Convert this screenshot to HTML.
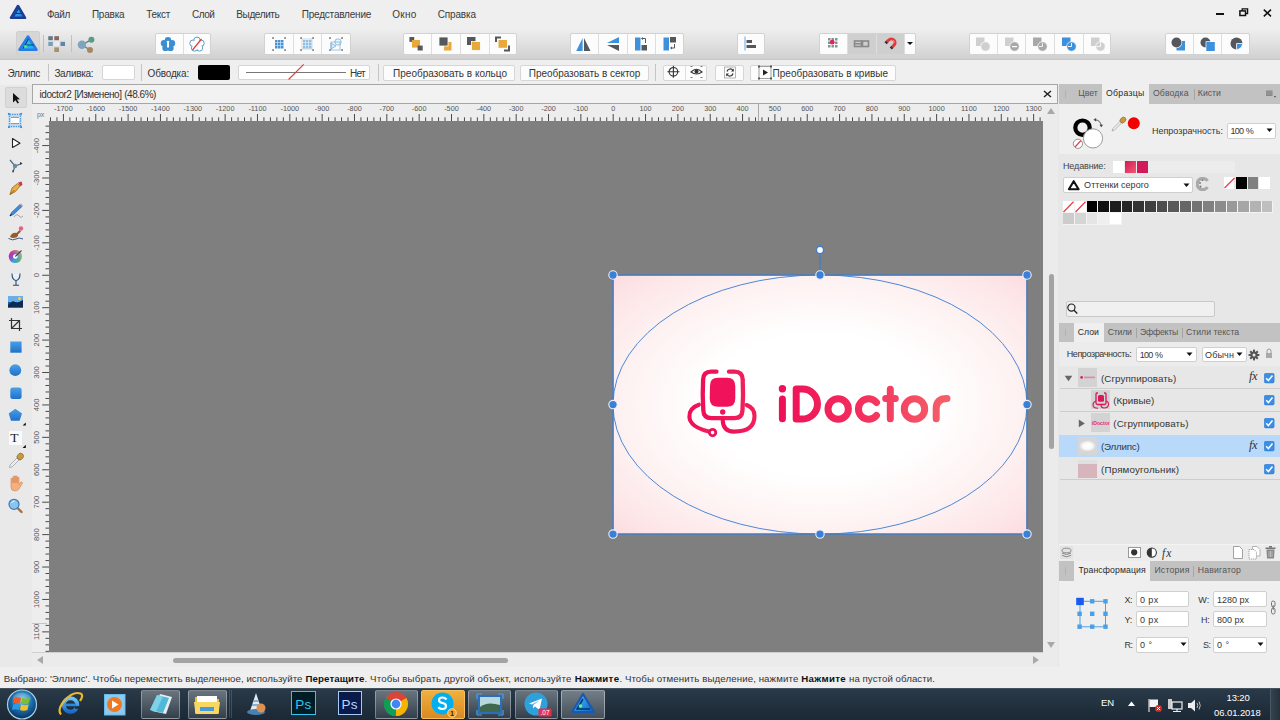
<!DOCTYPE html><html><head><meta charset="utf-8"><style>
*{margin:0;padding:0;box-sizing:border-box}
html,body{width:1280px;height:720px;overflow:hidden}
body{position:relative;background:#efefef;font-family:"Liberation Sans",sans-serif;color:#333}
.a{position:absolute}
.t{position:absolute;white-space:nowrap;line-height:1}
</style></head><body>
<div class="a" style="left:0px;top:0px;width:1280px;height:28px;background:#efefef"></div>
<svg class="a" style="left:9px;top:4px;" width="18" height="17" viewBox="0 0 18 17"><defs><linearGradient id="lg1" x1="0" y1="0" x2="1" y2="1"><stop offset="0" stop-color="#2ad0f0"/><stop offset="1" stop-color="#2a70e0"/></linearGradient></defs>
<path d="M9 2 L16 13.8 L2 13.8 Z" fill="url(#lg1)" stroke="#1c3c98" stroke-width="2.6" stroke-linejoin="round"/>
<path d="M9.5 4.5 L5 12.5 M7 9.5 H13" fill="none" stroke="#123070" stroke-width="1"/></svg>
<div class="t" style="left:46.90px;top:9.64px;font-size:10px;color:#3a3a3a;letter-spacing:-0.373px;">Файл</div>
<div class="t" style="left:91.90px;top:9.64px;font-size:10px;color:#3a3a3a;letter-spacing:-0.214px;">Правка</div>
<div class="t" style="left:146.30px;top:9.64px;font-size:10px;color:#3a3a3a;letter-spacing:-0.277px;">Текст</div>
<div class="t" style="left:191.90px;top:9.64px;font-size:10px;color:#3a3a3a;letter-spacing:-0.457px;">Слой</div>
<div class="t" style="left:236.30px;top:9.64px;font-size:10px;color:#3a3a3a;letter-spacing:-0.380px;">Выделить</div>
<div class="t" style="left:301.70px;top:9.64px;font-size:10px;color:#3a3a3a;letter-spacing:-0.201px;">Представление</div>
<div class="t" style="left:392.30px;top:9.64px;font-size:10px;color:#3a3a3a;letter-spacing:0.263px;">Окно</div>
<div class="t" style="left:437.70px;top:9.64px;font-size:10px;color:#3a3a3a;letter-spacing:-0.148px;">Справка</div>
<div class="a" style="left:1215.5px;top:12.8px;width:8px;height:2.4px;background:#111"></div>
<svg class="a" style="left:1238.5px;top:8px;" width="10" height="9" viewBox="0 0 10 9"><path d="M3.2 2.7V0.9h5.4v4.6h-1.8" fill="none" stroke="#111" stroke-width="1.3"/><rect x="0.9" y="2.9" width="5.6" height="4.6" fill="none" stroke="#111" stroke-width="1.5"/></svg>
<svg class="a" style="left:1262.5px;top:8.5px;" width="9" height="8" viewBox="0 0 9 8"><path d="M0.8 0.6L8 7.4M8 0.6L0.8 7.4" stroke="#111" stroke-width="1.5"/></svg>
<div class="a" style="left:0px;top:28px;width:1280px;height:32px;background:linear-gradient(#efefef 0%,#e2e2e2 45%,#cfcfcf 100%)"></div>
<div class="a" style="left:0px;top:59px;width:1280px;height:1px;background:#c8c8c8"></div>
<!--TOOLBAR-->
<div class="a" style="left:0px;top:60px;width:1280px;height:24px;background:#efefef"></div>
<!--CTX-->
<div class="a" style="left:0px;top:85px;width:32px;height:582px;background:#e9e9e9"></div>
<!--TOOLS-->
<div class="a" style="left:32px;top:84px;width:1026px;height:20px;background:#f2f2f2;border:1px solid #a6a6a6"></div>
<div class="t" style="left:39.60px;top:90.33px;font-size:10px;color:#333;letter-spacing:-0.468px;word-spacing:0.468px;">idoctor2 [Изменено] (48.6%)</div>
<svg class="a" style="left:1043px;top:90px;" width="9" height="8" viewBox="0 0 9 8"><path d="M1 1L8 7M8 1L1 7" stroke="#222" stroke-width="1.5"/></svg>
<div class="a" style="left:32px;top:104px;width:1011px;height:17px;background:#ededed"></div>
<div class="a" style="left:32px;top:121px;width:17px;height:531px;background:#ededed"></div>
<!--RULERS-->
<div class="a" style="left:49px;top:121px;width:994px;height:531px;background:#7f7f7f"></div>
<!--CANVAS-->
<div class="a" style="left:1043px;top:104px;width:16px;height:563px;background:#ebebeb"></div>
<div class="a" style="left:32px;top:652px;width:1011px;height:15px;background:#ebebeb"></div>
<!--SCROLL-->
<div class="a" style="left:1058px;top:84px;width:222px;height:583px;background:#e7e7e7"></div>
<!--PANEL-->
<div class="a" style="left:0px;top:667px;width:1280px;height:21px;background:#efefef"></div>
<!--STATUS-->
<div class="a" style="left:0px;top:688px;width:1280px;height:32px;background:linear-gradient(#2a3a48,#1b2835);border-top:1px solid #44525e"></div>
<!--TASK-->
<div class="a" style="left:16px;top:31px;width:24px;height:24px;background:#d6d6d6;border:1px solid #cfcfcf;border-radius:2px"></div>
<svg class="a" style="left:17px;top:34px;" width="22" height="19" viewBox="0 0 22 19"><defs><linearGradient id="ap" x1="0" y1="0" x2="1" y2="1"><stop offset="0" stop-color="#28d8f0"/><stop offset="1" stop-color="#1aa8e8"/></linearGradient></defs>
<path d="M11 2.5 L19.5 15.8 L2.5 15.8 Z" fill="url(#ap)" stroke="#2a7ae8" stroke-width="2.6" stroke-linejoin="round"/>
<path d="M11.5 5 L6 14.5 M8.5 11 H17" fill="none" stroke="#0d3d78" stroke-width="1.1"/><circle cx="8.5" cy="12.5" r="1.4" fill="#50e890"/></svg>
<div class="a" style="left:43px;top:35px;width:1px;height:17px;background:#c0c0c0"></div>
<svg class="a" style="left:47px;top:35px;" width="20" height="18" viewBox="0 0 20 18"><rect x="1.3" y="1.2" width="4.5" height="4" fill="#4f6b78" opacity="0.9"/><rect x="7.3" y="1.2" width="4.7" height="4" fill="#7b5a50" opacity="0.9"/><rect x="1.3" y="6.8" width="4.5" height="4.2" fill="#6a9ab0" opacity="0.9"/><rect x="7.3" y="6.8" width="4.7" height="4.2" fill="#f2e8f2"/><rect x="13.5" y="6.8" width="4.5" height="4.2" fill="#4a7fa0" opacity="0.9"/><rect x="7.3" y="12.4" width="4.7" height="4.6" fill="#a08868" opacity="0.9"/></svg>
<div class="a" style="left:71px;top:35px;width:1px;height:17px;background:#c0c0c0"></div>
<svg class="a" style="left:76px;top:35px;" width="20" height="18" viewBox="0 0 20 18"><path d="M6 9.8 L15.4 4.7 M6 9.8 L14 15" stroke="#6f7f88" stroke-width="1.4"/><circle cx="5.9" cy="9.8" r="4.2" fill="#7fa5bd"/><circle cx="15.4" cy="4.7" r="3" fill="#5a9a88"/><circle cx="14" cy="15" r="3" fill="#a48860"/></svg>
<div class="a" style="left:154.6px;top:32.5px;width:56.900000000000006px;height:22.9px;background:#fcfcfc;border:1px solid #d2d2d2;border-radius:2px"></div>
<div class="a" style="left:182.8px;top:33.5px;width:1px;height:20.9px;background:#dedede"></div>
<svg class="a" style="left:160px;top:36px;" width="16" height="16" viewBox="0 0 16 16"><g fill="#3b8ed3"><circle cx="8.00" cy="4.30" r="3.2"/><circle cx="11.99" cy="7.20" r="3.2"/><circle cx="10.47" cy="11.90" r="3.2"/><circle cx="5.53" cy="11.90" r="3.2"/><circle cx="4.01" cy="7.20" r="3.2"/><circle cx="8" cy="8.5" r="4.5"/></g><path d="M8 5.5v6" stroke="#fff" stroke-width="2"/><circle cx="8" cy="6" r="1.3" fill="#fff"/></svg>
<svg class="a" style="left:189px;top:36px;" width="16" height="16" viewBox="0 0 16 16"><g fill="#fff" stroke="#4a90c0" stroke-width="0.9"><circle cx="8.00" cy="4.30" r="3.2"/><circle cx="11.99" cy="7.20" r="3.2"/><circle cx="10.47" cy="11.90" r="3.2"/><circle cx="5.53" cy="11.90" r="3.2"/><circle cx="4.01" cy="7.20" r="3.2"/></g><g fill="#fff"><circle cx="8.00" cy="4.30" r="2.3"/><circle cx="11.99" cy="7.20" r="2.3"/><circle cx="10.47" cy="11.90" r="2.3"/><circle cx="5.53" cy="11.90" r="2.3"/><circle cx="4.01" cy="7.20" r="2.3"/><circle cx="8" cy="8.5" r="4.6"/></g><path d="M3.5 14 L12.5 3" stroke="#e04040" stroke-width="1.3"/></svg>
<div class="a" style="left:264.3px;top:32.5px;width:86.30000000000001px;height:22.9px;background:#fcfcfc;border:1px solid #d2d2d2;border-radius:2px"></div>
<div class="a" style="left:292.8px;top:33.5px;width:1px;height:20.9px;background:#dedede"></div>
<div class="a" style="left:321.3px;top:33.5px;width:1px;height:20.9px;background:#dedede"></div>
<svg class="a" style="left:271px;top:36px;" width="16" height="16" viewBox="0 0 16 16"><rect x="1.2" y="1.2" width="1.7" height="1.7" fill="#7a7a7a"/><rect x="13.2" y="1.2" width="1.7" height="1.7" fill="#7a7a7a"/><rect x="1.2" y="13.2" width="1.7" height="1.7" fill="#7a7a7a"/><rect x="13.2" y="13.2" width="1.7" height="1.7" fill="#7a7a7a"/><rect x="4" y="4" width="2.5" height="2.5" fill="#4a92d4"/><rect x="4" y="7" width="2.5" height="2.5" fill="#4a92d4"/><rect x="4" y="10" width="2.5" height="2.5" fill="#4a92d4"/><rect x="7" y="4" width="2.5" height="2.5" fill="#4a92d4"/><rect x="7" y="7" width="2.5" height="2.5" fill="#4a92d4"/><rect x="7" y="10" width="2.5" height="2.5" fill="#4a92d4"/><rect x="10" y="4" width="2.5" height="2.5" fill="#4a92d4"/><rect x="10" y="7" width="2.5" height="2.5" fill="#4a92d4"/><rect x="10" y="10" width="2.5" height="2.5" fill="#4a92d4"/></svg>
<svg class="a" style="left:299px;top:36px;" width="16" height="16" viewBox="0 0 16 16"><rect x="1.2" y="1.2" width="1.7" height="1.7" fill="#7a7a7a"/><rect x="13.2" y="1.2" width="1.7" height="1.7" fill="#7a7a7a"/><rect x="1.2" y="13.2" width="1.7" height="1.7" fill="#7a7a7a"/><rect x="13.2" y="13.2" width="1.7" height="1.7" fill="#7a7a7a"/><rect x="3" y="3" width="10" height="10" fill="none" stroke="#bbb" stroke-width="0.6"/><rect x="4" y="4" width="2.5" height="2.5" fill="#8cc0e8"/><rect x="4" y="7" width="2.5" height="2.5" fill="#8cc0e8"/><rect x="4" y="10" width="2.5" height="2.5" fill="#8cc0e8"/><rect x="7" y="4" width="2.5" height="2.5" fill="#8cc0e8"/><rect x="7" y="7" width="2.5" height="2.5" fill="#8cc0e8"/><rect x="7" y="10" width="2.5" height="2.5" fill="#8cc0e8"/><rect x="10" y="4" width="2.5" height="2.5" fill="#8cc0e8"/><rect x="10" y="7" width="2.5" height="2.5" fill="#8cc0e8"/><rect x="10" y="10" width="2.5" height="2.5" fill="#8cc0e8"/></svg>
<svg class="a" style="left:328px;top:36px;" width="16" height="16" viewBox="0 0 16 16"><rect x="1.2" y="1.2" width="1.7" height="1.7" fill="#7a7a7a"/><rect x="13.2" y="1.2" width="1.7" height="1.7" fill="#7a7a7a"/><rect x="1.2" y="13.2" width="1.7" height="1.7" fill="#7a7a7a"/><rect x="13.2" y="13.2" width="1.7" height="1.7" fill="#7a7a7a"/><circle cx="10" cy="6" r="3.2" fill="#eaf4fc" stroke="#7aaed8" stroke-width="0.8"/><path d="M3 7 L8 10 L3 13 Z" fill="#d8ecfa" stroke="#7aaed8" stroke-width="0.8"/><rect x="3" y="6" width="9" height="8" fill="none" stroke="#7aaed8" stroke-width="0.7"/></svg>
<div class="a" style="left:402.6px;top:32.5px;width:114.10000000000002px;height:22.9px;background:#fcfcfc;border:1px solid #d2d2d2;border-radius:2px"></div>
<div class="a" style="left:430.9px;top:33.5px;width:1px;height:20.9px;background:#dedede"></div>
<div class="a" style="left:459.5px;top:33.5px;width:1px;height:20.9px;background:#dedede"></div>
<div class="a" style="left:488.6px;top:33.5px;width:1px;height:20.9px;background:#dedede"></div>
<svg class="a" style="left:402px;top:32px;" width="28" height="23" viewBox="0 0 28 23"><rect x="7.4" y="5" width="4.8" height="4.8" fill="#54585c"/><rect x="10" y="8" width="8" height="7.6" fill="#e8a83a"/><rect x="15.6" y="13.6" width="5.1" height="4.9" fill="#54585c"/></svg>
<svg class="a" style="left:431px;top:32px;" width="28" height="23" viewBox="0 0 28 23"><rect x="13" y="10" width="7.5" height="8.5" fill="#e8a83a"/><rect x="8" y="5" width="9" height="9" fill="#54585c" stroke="#fff" stroke-width="0.8"/></svg>
<svg class="a" style="left:460px;top:32px;" width="28" height="23" viewBox="0 0 28 23"><rect x="7" y="5" width="8.5" height="8" fill="#54585c"/><rect x="11.5" y="9.5" width="9" height="9" fill="#e8a83a" stroke="#fff" stroke-width="0.8"/></svg>
<svg class="a" style="left:489px;top:32px;" width="28" height="23" viewBox="0 0 28 23"><path d="M7 10V5.5h5" fill="none" stroke="#54585c" stroke-width="2"/><path d="M20 13.5V18.5h-5" fill="none" stroke="#54585c" stroke-width="2"/><rect x="9.5" y="8" width="8.5" height="7.8" fill="#e8a83a"/></svg>
<div class="a" style="left:569.7px;top:32.5px;width:114.39999999999998px;height:22.9px;background:#fcfcfc;border:1px solid #d2d2d2;border-radius:2px"></div>
<div class="a" style="left:598.2px;top:33.5px;width:1px;height:20.9px;background:#dedede"></div>
<div class="a" style="left:626.5px;top:33.5px;width:1px;height:20.9px;background:#dedede"></div>
<div class="a" style="left:655.3px;top:33.5px;width:1px;height:20.9px;background:#dedede"></div>
<svg class="a" style="left:570px;top:32px;" width="28" height="23" viewBox="0 0 28 23"><path d="M12.6 6 L12.6 19 L6.2 19 Z" fill="#3d91dc"/><path d="M14 6 L14 19 L20.5 19 Z" fill="#54585c"/></svg>
<svg class="a" style="left:598px;top:32px;" width="28" height="23" viewBox="0 0 28 23"><path d="M21 5 L21 11 L9 11 Z" fill="#3d91dc"/><path d="M21 19 L21 13 L9 13 Z" fill="#54585c"/></svg>
<svg class="a" style="left:627px;top:32px;" width="28" height="23" viewBox="0 0 28 23"><rect x="8" y="5.5" width="5.5" height="13" fill="#3d91dc"/><rect x="14.5" y="13" width="5.5" height="5.5" fill="#54585c"/><path d="M15 6.5h3.5v4.5" fill="none" stroke="#54585c" stroke-width="1"/><path d="M14 6.5l2-1.6v3.2z" fill="#54585c"/></svg>
<svg class="a" style="left:655px;top:32px;" width="28" height="23" viewBox="0 0 28 23"><rect x="8.5" y="5.5" width="5.5" height="13" fill="#3d91dc"/><rect x="15" y="5" width="6" height="5.5" fill="#54585c"/><path d="M19.5 12v4h-3.5" fill="none" stroke="#54585c" stroke-width="1"/><path d="M15 16l2-1.6v3.2z" fill="#54585c"/></svg>
<div class="a" style="left:737.1px;top:32.5px;width:28.199999999999932px;height:22.9px;background:#fcfcfc;border:1px solid #d2d2d2;border-radius:2px"></div>
<svg class="a" style="left:737px;top:32px;" width="28" height="23" viewBox="0 0 28 23"><rect x="7.5" y="4.5" width="1" height="14" fill="#6aa8e0"/><rect x="9.5" y="8" width="5.5" height="3" fill="#54585c"/><rect x="9.5" y="13" width="9.5" height="3" fill="#54585c"/></svg>
<div class="a" style="left:818.7px;top:32.5px;width:97.5px;height:22.9px;background:#fcfcfc;border:1px solid #d2d2d2;border-radius:2px"></div>
<div class="a" style="left:847px;top:33.5px;width:57px;height:20.9px;background:#cfcfcf"></div>
<div class="a" style="left:847px;top:33.5px;width:1px;height:20.9px;background:#dedede"></div>
<div class="a" style="left:875.5px;top:33.5px;width:1px;height:20.9px;background:#dedede"></div>
<div class="a" style="left:904px;top:33.5px;width:1px;height:20.9px;background:#dedede"></div>
<svg class="a" style="left:819px;top:32px;" width="28" height="23" viewBox="0 0 28 23"><rect x="9.0" y="6.0" width="2.5" height="2.5" fill="#7a9a88"/><rect x="9.0" y="9.5" width="2.5" height="2.5" fill="#7a9a88"/><rect x="9.0" y="13.0" width="2.5" height="2.5" fill="#7a9a88"/><rect x="12.5" y="6.0" width="2.5" height="2.5" fill="#7a9a88"/><rect x="12.5" y="9.5" width="2.5" height="2.5" fill="#7a9a88"/><rect x="12.5" y="13.0" width="2.5" height="2.5" fill="#7a9a88"/><rect x="16.0" y="6.0" width="2.5" height="2.5" fill="#7a9a88"/><rect x="16.0" y="9.5" width="2.5" height="2.5" fill="#7a9a88"/><rect x="16.0" y="13.0" width="2.5" height="2.5" fill="#7a9a88"/><circle cx="13.2" cy="10.2" r="2.4" fill="#e0206a"/></svg>
<svg class="a" style="left:847px;top:32px;" width="28" height="23" viewBox="0 0 28 23"><rect x="7.5" y="9" width="7" height="5.5" fill="none" stroke="#888" stroke-width="1.6"/><rect x="15.5" y="9" width="6" height="5.5" fill="none" stroke="#888" stroke-width="1.6"/><rect x="8" y="11" width="6" height="1.5" fill="#888"/></svg>
<svg class="a" style="left:876px;top:32px;" width="28" height="23" viewBox="0 0 28 23"><g transform="rotate(45 15 11)"><path d="M11.3 12.8 V10.5 A3.7 3.7 0 0 1 18.7 10.5 V12.8" fill="none" stroke="#e23a3a" stroke-width="3"/><path d="M14 7.5 A2.5 2.5 0 0 1 17 9" fill="none" stroke="#f4a0a0" stroke-width="0.8"/><rect x="9.8" y="12.8" width="3" height="2.2" fill="#333"/><rect x="17.2" y="12.8" width="3" height="2.2" fill="#333"/></g></svg>
<svg class="a" style="left:904px;top:32px;" width="12" height="23" viewBox="0 0 12 23"><path d="M3 10h6l-3 3z" fill="#111"/></svg>
<div class="a" style="left:968.5px;top:32.5px;width:142.79999999999995px;height:22.9px;background:#fcfcfc;border:1px solid #d2d2d2;border-radius:2px"></div>
<div class="a" style="left:996.9px;top:33.5px;width:1px;height:20.9px;background:#dedede"></div>
<div class="a" style="left:1025.4px;top:33.5px;width:1px;height:20.9px;background:#dedede"></div>
<div class="a" style="left:1054.3px;top:33.5px;width:1px;height:20.9px;background:#dedede"></div>
<div class="a" style="left:1083.2px;top:33.5px;width:1px;height:20.9px;background:#dedede"></div>
<svg class="a" style="left:969px;top:32px;" width="28" height="23" viewBox="0 0 28 23"><rect x="7" y="5.5" width="8.5" height="8.5" fill="#cfcfcf"/><circle cx="16.5" cy="14.5" r="4.8" fill="#cfcfcf" stroke="#fff" stroke-width="0.8"/></svg>
<svg class="a" style="left:997.5px;top:32px;" width="28" height="23" viewBox="0 0 28 23"><rect x="7" y="5.5" width="8.5" height="8.5" fill="#cfcfcf"/><circle cx="16.5" cy="14.5" r="4.8" fill="#a8a8a8" stroke="#fff" stroke-width="0.8"/><rect x="14" y="14" width="5" height="1.2" fill="#fff"/></svg>
<svg class="a" style="left:1026px;top:32px;" width="28" height="23" viewBox="0 0 28 23"><rect x="7" y="5.5" width="8.5" height="8.5" fill="#a8a8a8"/><circle cx="16.5" cy="14.5" r="4.8" fill="#a8a8a8" stroke="#fff" stroke-width="0.8"/><path d="M16.5 14.5v-3.5M16.5 14.5h-3.5" stroke="#fff" stroke-width="0.8"/></svg>
<svg class="a" style="left:1054.7px;top:32px;" width="28" height="23" viewBox="0 0 28 23"><rect x="7" y="5.5" width="8.5" height="8.5" fill="#3d91dc"/><circle cx="16.5" cy="14.5" r="4.8" fill="#3d91dc" stroke="#fff" stroke-width="0.8"/><path d="M16.5 14.5v-3.5M16.5 14.5h-3.5" stroke="#fff" stroke-width="0.9"/></svg>
<svg class="a" style="left:1083.5px;top:32px;" width="28" height="23" viewBox="0 0 28 23"><rect x="7" y="5.5" width="8.5" height="8.5" fill="#cfcfcf"/><circle cx="16.5" cy="14.5" r="4.8" fill="#cfcfcf" stroke="#fff" stroke-width="0.8"/><path d="M16.5 14.5v-4M16.5 14.5h-4" stroke="#fff" stroke-width="0.8"/></svg>
<div class="a" style="left:1164.5px;top:32.5px;width:85.70000000000005px;height:22.9px;background:#fcfcfc;border:1px solid #d2d2d2;border-radius:2px"></div>
<div class="a" style="left:1192.8px;top:33.5px;width:1px;height:20.9px;background:#dedede"></div>
<div class="a" style="left:1221.3px;top:33.5px;width:1px;height:20.9px;background:#dedede"></div>
<svg class="a" style="left:1164.5px;top:32px;" width="28" height="23" viewBox="0 0 28 23"><rect x="11.5" y="9" width="8.5" height="9.5" fill="#3d91dc"/><circle cx="11.5" cy="10.5" r="5.6" fill="#fff"/><circle cx="11.5" cy="10.5" r="5" fill="#54585c"/></svg>
<svg class="a" style="left:1193px;top:32px;" width="28" height="23" viewBox="0 0 28 23"><circle cx="12.5" cy="10.5" r="5" fill="#54585c"/><rect x="12.6" y="9.3" width="9.6" height="9.8" fill="#fff"/><rect x="13.3" y="10" width="8.5" height="9" fill="#3d91dc"/></svg>
<svg class="a" style="left:1221.5px;top:32px;" width="28" height="23" viewBox="0 0 28 23"><circle cx="14.5" cy="11.5" r="6" fill="#54585c"/><path d="M14.5 11.5 H20.5 A6 6 0 0 1 14.5 17.5 Z" fill="#3d91dc" stroke="#fff" stroke-width="0.8"/></svg>
<div class="t" style="left:7.50px;top:69.13px;font-size:10px;color:#353535;letter-spacing:-0.339px;">Эллипс</div>
<div class="a" style="left:48px;top:64px;width:1px;height:17px;background:#c4c4c4"></div>
<div class="t" style="left:54.40px;top:69.13px;font-size:10px;color:#353535;letter-spacing:-0.310px;">Заливка:</div>
<div class="a" style="left:101.5px;top:64.6px;width:33px;height:15.5px;background:#fff;border:1px solid #d6d6d6;border-radius:2px"></div>
<div class="a" style="left:141px;top:64px;width:1px;height:17px;background:#c4c4c4"></div>
<div class="t" style="left:147.60px;top:69.13px;font-size:10px;color:#353535;letter-spacing:-0.179px;">Обводка:</div>
<div class="a" style="left:198px;top:64.6px;width:32px;height:15.5px;background:#000;border-radius:2px"></div>
<div class="a" style="left:237.8px;top:64.7px;width:132.4px;height:15.6px;background:#fff;border:1px solid #d6d6d6;border-radius:2px"></div>
<div class="a" style="left:246.4px;top:72px;width:100px;height:1px;background:#777"></div>
<svg class="a" style="left:286px;top:63px;" width="20" height="18" viewBox="0 0 20 18"><path d="M2.6 16.5 L17.7 1.4" stroke="#e23a3a" stroke-width="1.1"/></svg>
<div class="t" style="left:350.00px;top:68.63px;font-size:10px;color:#353535;letter-spacing:-0.777px;">Нет</div>
<div class="a" style="left:377.5px;top:64px;width:1px;height:17px;background:#c4c4c4"></div>
<div class="a" style="left:383.3px;top:64.6px;width:131.9px;height:16.5px;background:#fcfcfc;border:1px solid #d6d6d6;border-radius:2px"></div>
<div class="t" style="left:393.10px;top:69.13px;font-size:10px;color:#353535;">Преобразовать в кольцо</div>
<div class="a" style="left:520px;top:64.6px;width:128.7px;height:16.5px;background:#fcfcfc;border:1px solid #d6d6d6;border-radius:2px"></div>
<div class="t" style="left:528.80px;top:69.13px;font-size:10px;color:#353535;letter-spacing:-0.045px;word-spacing:0.045px;">Преобразовать в сектор</div>
<div class="a" style="left:654.5px;top:64px;width:1px;height:17px;background:#c4c4c4"></div>
<div class="a" style="left:662.6px;top:64.6px;width:44.7px;height:16.5px;background:#fcfcfc;border:1px solid #d6d6d6;border-radius:2px"></div>
<div class="a" style="left:685.3px;top:65.5px;width:1px;height:14px;background:#e0e0e0"></div>
<svg class="a" style="left:666px;top:65px;" width="15" height="14" viewBox="0 0 15 14"><circle cx="7.4" cy="6.8" r="4.3" fill="none" stroke="#333" stroke-width="1.1"/><path d="M7.4 0.8v12M1.4 6.8h12" stroke="#333" stroke-width="1.1"/></svg>
<svg class="a" style="left:689px;top:65px;" width="15" height="14" viewBox="0 0 15 14"><path d="M1.5 1.5h2M11.5 1.5h2M1.5 12.5h2M11.5 12.5h2" stroke="#555" stroke-width="0.8"/><path d="M2 7 Q7.5 1.5 13 7 Q7.5 11 2 7Z" fill="none" stroke="#333" stroke-width="1.1"/><circle cx="7.5" cy="6.5" r="2" fill="#333"/></svg>
<div class="a" style="left:714.6px;top:64.6px;width:29.9px;height:16.5px;background:#fcfcfc;border:1px solid #d6d6d6;border-radius:2px"></div>
<svg class="a" style="left:723px;top:65px;" width="14" height="15" viewBox="0 0 14 15"><rect x="1.5" y="2" width="11" height="11" fill="none" stroke="#999" stroke-width="0.7"/><path d="M4 6.5 A3.3 3.3 0 0 1 10 5.5M10 8.5 A3.3 3.3 0 0 1 4 9.5" fill="none" stroke="#333" stroke-width="1.2"/><path d="M10.8 3.6v2.8h-2.8z M3.2 11.4V8.6h2.8z" fill="#333"/></svg>
<div class="a" style="left:749.6px;top:64.6px;width:146.7px;height:16.5px;background:#fcfcfc;border:1px solid #d6d6d6;border-radius:2px"></div>
<svg class="a" style="left:757px;top:65px;" width="16" height="15" viewBox="0 0 16 15"><rect x="2" y="1.5" width="12" height="12" fill="none" stroke="#888" stroke-width="0.8"/><path d="M6 4.5 L11 7.5 L6 10.5Z" fill="#222"/><rect x="1" y="0.5" width="2" height="2" fill="#555"/><rect x="13" y="12.5" width="2" height="2" fill="#555"/><rect x="13" y="0.5" width="2" height="2" fill="#555"/><rect x="1" y="12.5" width="2" height="2" fill="#555"/></svg>
<div class="t" style="left:772.60px;top:69.13px;font-size:10px;color:#353535;">Преобразовать в кривые</div>
<svg class="a" style="left:49px;top:104px;" width="994" height="17" viewBox="0 0 994 17"><rect x="0.98" y="13.3" width="1" height="3.7" fill="#4a4a4a"/><rect x="7.45" y="13.3" width="1" height="3.7" fill="#4a4a4a"/><rect x="13.92" y="10" width="1" height="7" fill="#4a4a4a"/><text x="14.42" y="7.4" font-size="7.3" text-anchor="middle" fill="#555" font-family="Liberation Sans">-1700</text><rect x="20.39" y="13.3" width="1" height="3.7" fill="#4a4a4a"/><rect x="26.86" y="13.3" width="1" height="3.7" fill="#4a4a4a"/><rect x="33.32" y="13.3" width="1" height="3.7" fill="#4a4a4a"/><rect x="39.79" y="13.3" width="1" height="3.7" fill="#4a4a4a"/><rect x="46.26" y="10" width="1" height="7" fill="#4a4a4a"/><text x="46.76" y="7.4" font-size="7.3" text-anchor="middle" fill="#555" font-family="Liberation Sans">-1600</text><rect x="52.73" y="13.3" width="1" height="3.7" fill="#4a4a4a"/><rect x="59.20" y="13.3" width="1" height="3.7" fill="#4a4a4a"/><rect x="65.66" y="13.3" width="1" height="3.7" fill="#4a4a4a"/><rect x="72.13" y="13.3" width="1" height="3.7" fill="#4a4a4a"/><rect x="78.60" y="10" width="1" height="7" fill="#4a4a4a"/><text x="79.10" y="7.4" font-size="7.3" text-anchor="middle" fill="#555" font-family="Liberation Sans">-1500</text><rect x="85.07" y="13.3" width="1" height="3.7" fill="#4a4a4a"/><rect x="91.54" y="13.3" width="1" height="3.7" fill="#4a4a4a"/><rect x="98.00" y="13.3" width="1" height="3.7" fill="#4a4a4a"/><rect x="104.47" y="13.3" width="1" height="3.7" fill="#4a4a4a"/><rect x="110.94" y="10" width="1" height="7" fill="#4a4a4a"/><text x="111.44" y="7.4" font-size="7.3" text-anchor="middle" fill="#555" font-family="Liberation Sans">-1400</text><rect x="117.41" y="13.3" width="1" height="3.7" fill="#4a4a4a"/><rect x="123.88" y="13.3" width="1" height="3.7" fill="#4a4a4a"/><rect x="130.34" y="13.3" width="1" height="3.7" fill="#4a4a4a"/><rect x="136.81" y="13.3" width="1" height="3.7" fill="#4a4a4a"/><rect x="143.28" y="10" width="1" height="7" fill="#4a4a4a"/><text x="143.78" y="7.4" font-size="7.3" text-anchor="middle" fill="#555" font-family="Liberation Sans">-1300</text><rect x="149.75" y="13.3" width="1" height="3.7" fill="#4a4a4a"/><rect x="156.22" y="13.3" width="1" height="3.7" fill="#4a4a4a"/><rect x="162.68" y="13.3" width="1" height="3.7" fill="#4a4a4a"/><rect x="169.15" y="13.3" width="1" height="3.7" fill="#4a4a4a"/><rect x="175.62" y="10" width="1" height="7" fill="#4a4a4a"/><text x="176.12" y="7.4" font-size="7.3" text-anchor="middle" fill="#555" font-family="Liberation Sans">-1200</text><rect x="182.09" y="13.3" width="1" height="3.7" fill="#4a4a4a"/><rect x="188.56" y="13.3" width="1" height="3.7" fill="#4a4a4a"/><rect x="195.02" y="13.3" width="1" height="3.7" fill="#4a4a4a"/><rect x="201.49" y="13.3" width="1" height="3.7" fill="#4a4a4a"/><rect x="207.96" y="10" width="1" height="7" fill="#4a4a4a"/><text x="208.46" y="7.4" font-size="7.3" text-anchor="middle" fill="#555" font-family="Liberation Sans">-1100</text><rect x="214.43" y="13.3" width="1" height="3.7" fill="#4a4a4a"/><rect x="220.90" y="13.3" width="1" height="3.7" fill="#4a4a4a"/><rect x="227.36" y="13.3" width="1" height="3.7" fill="#4a4a4a"/><rect x="233.83" y="13.3" width="1" height="3.7" fill="#4a4a4a"/><rect x="240.30" y="10" width="1" height="7" fill="#4a4a4a"/><text x="240.80" y="7.4" font-size="7.3" text-anchor="middle" fill="#555" font-family="Liberation Sans">-1000</text><rect x="246.77" y="13.3" width="1" height="3.7" fill="#4a4a4a"/><rect x="253.24" y="13.3" width="1" height="3.7" fill="#4a4a4a"/><rect x="259.70" y="13.3" width="1" height="3.7" fill="#4a4a4a"/><rect x="266.17" y="13.3" width="1" height="3.7" fill="#4a4a4a"/><rect x="272.64" y="10" width="1" height="7" fill="#4a4a4a"/><text x="273.14" y="7.4" font-size="7.3" text-anchor="middle" fill="#555" font-family="Liberation Sans">-900</text><rect x="279.11" y="13.3" width="1" height="3.7" fill="#4a4a4a"/><rect x="285.58" y="13.3" width="1" height="3.7" fill="#4a4a4a"/><rect x="292.04" y="13.3" width="1" height="3.7" fill="#4a4a4a"/><rect x="298.51" y="13.3" width="1" height="3.7" fill="#4a4a4a"/><rect x="304.98" y="10" width="1" height="7" fill="#4a4a4a"/><text x="305.48" y="7.4" font-size="7.3" text-anchor="middle" fill="#555" font-family="Liberation Sans">-800</text><rect x="311.45" y="13.3" width="1" height="3.7" fill="#4a4a4a"/><rect x="317.92" y="13.3" width="1" height="3.7" fill="#4a4a4a"/><rect x="324.38" y="13.3" width="1" height="3.7" fill="#4a4a4a"/><rect x="330.85" y="13.3" width="1" height="3.7" fill="#4a4a4a"/><rect x="337.32" y="10" width="1" height="7" fill="#4a4a4a"/><text x="337.82" y="7.4" font-size="7.3" text-anchor="middle" fill="#555" font-family="Liberation Sans">-700</text><rect x="343.79" y="13.3" width="1" height="3.7" fill="#4a4a4a"/><rect x="350.26" y="13.3" width="1" height="3.7" fill="#4a4a4a"/><rect x="356.72" y="13.3" width="1" height="3.7" fill="#4a4a4a"/><rect x="363.19" y="13.3" width="1" height="3.7" fill="#4a4a4a"/><rect x="369.66" y="10" width="1" height="7" fill="#4a4a4a"/><text x="370.16" y="7.4" font-size="7.3" text-anchor="middle" fill="#555" font-family="Liberation Sans">-600</text><rect x="376.13" y="13.3" width="1" height="3.7" fill="#4a4a4a"/><rect x="382.60" y="13.3" width="1" height="3.7" fill="#4a4a4a"/><rect x="389.06" y="13.3" width="1" height="3.7" fill="#4a4a4a"/><rect x="395.53" y="13.3" width="1" height="3.7" fill="#4a4a4a"/><rect x="402.00" y="10" width="1" height="7" fill="#4a4a4a"/><text x="402.50" y="7.4" font-size="7.3" text-anchor="middle" fill="#555" font-family="Liberation Sans">-500</text><rect x="408.47" y="13.3" width="1" height="3.7" fill="#4a4a4a"/><rect x="414.94" y="13.3" width="1" height="3.7" fill="#4a4a4a"/><rect x="421.40" y="13.3" width="1" height="3.7" fill="#4a4a4a"/><rect x="427.87" y="13.3" width="1" height="3.7" fill="#4a4a4a"/><rect x="434.34" y="10" width="1" height="7" fill="#4a4a4a"/><text x="434.84" y="7.4" font-size="7.3" text-anchor="middle" fill="#555" font-family="Liberation Sans">-400</text><rect x="440.81" y="13.3" width="1" height="3.7" fill="#4a4a4a"/><rect x="447.28" y="13.3" width="1" height="3.7" fill="#4a4a4a"/><rect x="453.74" y="13.3" width="1" height="3.7" fill="#4a4a4a"/><rect x="460.21" y="13.3" width="1" height="3.7" fill="#4a4a4a"/><rect x="466.68" y="10" width="1" height="7" fill="#4a4a4a"/><text x="467.18" y="7.4" font-size="7.3" text-anchor="middle" fill="#555" font-family="Liberation Sans">-300</text><rect x="473.15" y="13.3" width="1" height="3.7" fill="#4a4a4a"/><rect x="479.62" y="13.3" width="1" height="3.7" fill="#4a4a4a"/><rect x="486.08" y="13.3" width="1" height="3.7" fill="#4a4a4a"/><rect x="492.55" y="13.3" width="1" height="3.7" fill="#4a4a4a"/><rect x="499.02" y="10" width="1" height="7" fill="#4a4a4a"/><text x="499.52" y="7.4" font-size="7.3" text-anchor="middle" fill="#555" font-family="Liberation Sans">-200</text><rect x="505.49" y="13.3" width="1" height="3.7" fill="#4a4a4a"/><rect x="511.96" y="13.3" width="1" height="3.7" fill="#4a4a4a"/><rect x="518.42" y="13.3" width="1" height="3.7" fill="#4a4a4a"/><rect x="524.89" y="13.3" width="1" height="3.7" fill="#4a4a4a"/><rect x="531.36" y="10" width="1" height="7" fill="#4a4a4a"/><text x="531.86" y="7.4" font-size="7.3" text-anchor="middle" fill="#555" font-family="Liberation Sans">-100</text><rect x="537.83" y="13.3" width="1" height="3.7" fill="#4a4a4a"/><rect x="544.30" y="13.3" width="1" height="3.7" fill="#4a4a4a"/><rect x="550.76" y="13.3" width="1" height="3.7" fill="#4a4a4a"/><rect x="557.23" y="13.3" width="1" height="3.7" fill="#4a4a4a"/><rect x="563.70" y="10" width="1" height="7" fill="#4a4a4a"/><text x="564.20" y="7.4" font-size="7.3" text-anchor="middle" fill="#555" font-family="Liberation Sans">0</text><rect x="570.17" y="13.3" width="1" height="3.7" fill="#4a4a4a"/><rect x="576.64" y="13.3" width="1" height="3.7" fill="#4a4a4a"/><rect x="583.10" y="13.3" width="1" height="3.7" fill="#4a4a4a"/><rect x="589.57" y="13.3" width="1" height="3.7" fill="#4a4a4a"/><rect x="596.04" y="10" width="1" height="7" fill="#4a4a4a"/><text x="596.54" y="7.4" font-size="7.3" text-anchor="middle" fill="#555" font-family="Liberation Sans">100</text><rect x="602.51" y="13.3" width="1" height="3.7" fill="#4a4a4a"/><rect x="608.98" y="13.3" width="1" height="3.7" fill="#4a4a4a"/><rect x="615.44" y="13.3" width="1" height="3.7" fill="#4a4a4a"/><rect x="621.91" y="13.3" width="1" height="3.7" fill="#4a4a4a"/><rect x="628.38" y="10" width="1" height="7" fill="#4a4a4a"/><text x="628.88" y="7.4" font-size="7.3" text-anchor="middle" fill="#555" font-family="Liberation Sans">200</text><rect x="634.85" y="13.3" width="1" height="3.7" fill="#4a4a4a"/><rect x="641.32" y="13.3" width="1" height="3.7" fill="#4a4a4a"/><rect x="647.78" y="13.3" width="1" height="3.7" fill="#4a4a4a"/><rect x="654.25" y="13.3" width="1" height="3.7" fill="#4a4a4a"/><rect x="660.72" y="10" width="1" height="7" fill="#4a4a4a"/><text x="661.22" y="7.4" font-size="7.3" text-anchor="middle" fill="#555" font-family="Liberation Sans">300</text><rect x="667.19" y="13.3" width="1" height="3.7" fill="#4a4a4a"/><rect x="673.66" y="13.3" width="1" height="3.7" fill="#4a4a4a"/><rect x="680.12" y="13.3" width="1" height="3.7" fill="#4a4a4a"/><rect x="686.59" y="13.3" width="1" height="3.7" fill="#4a4a4a"/><rect x="693.06" y="10" width="1" height="7" fill="#4a4a4a"/><text x="693.56" y="7.4" font-size="7.3" text-anchor="middle" fill="#555" font-family="Liberation Sans">400</text><rect x="699.53" y="13.3" width="1" height="3.7" fill="#4a4a4a"/><rect x="706.00" y="13.3" width="1" height="3.7" fill="#4a4a4a"/><rect x="712.46" y="13.3" width="1" height="3.7" fill="#4a4a4a"/><rect x="718.93" y="13.3" width="1" height="3.7" fill="#4a4a4a"/><rect x="725.40" y="10" width="1" height="7" fill="#4a4a4a"/><text x="725.90" y="7.4" font-size="7.3" text-anchor="middle" fill="#555" font-family="Liberation Sans">500</text><rect x="731.87" y="13.3" width="1" height="3.7" fill="#4a4a4a"/><rect x="738.34" y="13.3" width="1" height="3.7" fill="#4a4a4a"/><rect x="744.80" y="13.3" width="1" height="3.7" fill="#4a4a4a"/><rect x="751.27" y="13.3" width="1" height="3.7" fill="#4a4a4a"/><rect x="757.74" y="10" width="1" height="7" fill="#4a4a4a"/><text x="758.24" y="7.4" font-size="7.3" text-anchor="middle" fill="#555" font-family="Liberation Sans">600</text><rect x="764.21" y="13.3" width="1" height="3.7" fill="#4a4a4a"/><rect x="770.68" y="13.3" width="1" height="3.7" fill="#4a4a4a"/><rect x="777.14" y="13.3" width="1" height="3.7" fill="#4a4a4a"/><rect x="783.61" y="13.3" width="1" height="3.7" fill="#4a4a4a"/><rect x="790.08" y="10" width="1" height="7" fill="#4a4a4a"/><text x="790.58" y="7.4" font-size="7.3" text-anchor="middle" fill="#555" font-family="Liberation Sans">700</text><rect x="796.55" y="13.3" width="1" height="3.7" fill="#4a4a4a"/><rect x="803.02" y="13.3" width="1" height="3.7" fill="#4a4a4a"/><rect x="809.48" y="13.3" width="1" height="3.7" fill="#4a4a4a"/><rect x="815.95" y="13.3" width="1" height="3.7" fill="#4a4a4a"/><rect x="822.42" y="10" width="1" height="7" fill="#4a4a4a"/><text x="822.92" y="7.4" font-size="7.3" text-anchor="middle" fill="#555" font-family="Liberation Sans">800</text><rect x="828.89" y="13.3" width="1" height="3.7" fill="#4a4a4a"/><rect x="835.36" y="13.3" width="1" height="3.7" fill="#4a4a4a"/><rect x="841.82" y="13.3" width="1" height="3.7" fill="#4a4a4a"/><rect x="848.29" y="13.3" width="1" height="3.7" fill="#4a4a4a"/><rect x="854.76" y="10" width="1" height="7" fill="#4a4a4a"/><text x="855.26" y="7.4" font-size="7.3" text-anchor="middle" fill="#555" font-family="Liberation Sans">900</text><rect x="861.23" y="13.3" width="1" height="3.7" fill="#4a4a4a"/><rect x="867.70" y="13.3" width="1" height="3.7" fill="#4a4a4a"/><rect x="874.16" y="13.3" width="1" height="3.7" fill="#4a4a4a"/><rect x="880.63" y="13.3" width="1" height="3.7" fill="#4a4a4a"/><rect x="887.10" y="10" width="1" height="7" fill="#4a4a4a"/><text x="887.60" y="7.4" font-size="7.3" text-anchor="middle" fill="#555" font-family="Liberation Sans">1000</text><rect x="893.57" y="13.3" width="1" height="3.7" fill="#4a4a4a"/><rect x="900.04" y="13.3" width="1" height="3.7" fill="#4a4a4a"/><rect x="906.50" y="13.3" width="1" height="3.7" fill="#4a4a4a"/><rect x="912.97" y="13.3" width="1" height="3.7" fill="#4a4a4a"/><rect x="919.44" y="10" width="1" height="7" fill="#4a4a4a"/><text x="919.94" y="7.4" font-size="7.3" text-anchor="middle" fill="#555" font-family="Liberation Sans">1100</text><rect x="925.91" y="13.3" width="1" height="3.7" fill="#4a4a4a"/><rect x="932.38" y="13.3" width="1" height="3.7" fill="#4a4a4a"/><rect x="938.84" y="13.3" width="1" height="3.7" fill="#4a4a4a"/><rect x="945.31" y="13.3" width="1" height="3.7" fill="#4a4a4a"/><rect x="951.78" y="10" width="1" height="7" fill="#4a4a4a"/><text x="952.28" y="7.4" font-size="7.3" text-anchor="middle" fill="#555" font-family="Liberation Sans">1200</text><rect x="958.25" y="13.3" width="1" height="3.7" fill="#4a4a4a"/><rect x="964.72" y="13.3" width="1" height="3.7" fill="#4a4a4a"/><rect x="971.18" y="13.3" width="1" height="3.7" fill="#4a4a4a"/><rect x="977.65" y="13.3" width="1" height="3.7" fill="#4a4a4a"/><rect x="984.12" y="10" width="1" height="7" fill="#4a4a4a"/><text x="984.62" y="7.4" font-size="7.3" text-anchor="middle" fill="#555" font-family="Liberation Sans">1300</text><rect x="990.59" y="13.3" width="1" height="3.7" fill="#4a4a4a"/></svg>
<div class="t" style="left:37.00px;top:111.07px;font-size:7px;color:#777;letter-spacing:-0.203px;">px</div>
<svg class="a" style="left:32px;top:121px;" width="17" height="531" viewBox="0 0 17 531"><rect x="13.5" y="4.62" width="3.5" height="1" fill="#4a4a4a"/><rect x="13.5" y="11.10" width="3.5" height="1" fill="#4a4a4a"/><rect x="13.5" y="17.59" width="3.5" height="1" fill="#4a4a4a"/><rect x="10.2" y="24.07" width="6.8" height="1" fill="#4a4a4a"/><text x="0" y="0" transform="translate(7 24.57) rotate(-90)" font-size="7.6" text-anchor="middle" fill="#555" font-family="Liberation Sans">-400</text><rect x="13.5" y="30.55" width="3.5" height="1" fill="#4a4a4a"/><rect x="13.5" y="37.04" width="3.5" height="1" fill="#4a4a4a"/><rect x="13.5" y="43.52" width="3.5" height="1" fill="#4a4a4a"/><rect x="13.5" y="50.01" width="3.5" height="1" fill="#4a4a4a"/><rect x="10.2" y="56.49" width="6.8" height="1" fill="#4a4a4a"/><text x="0" y="0" transform="translate(7 56.99) rotate(-90)" font-size="7.6" text-anchor="middle" fill="#555" font-family="Liberation Sans">-300</text><rect x="13.5" y="62.97" width="3.5" height="1" fill="#4a4a4a"/><rect x="13.5" y="69.46" width="3.5" height="1" fill="#4a4a4a"/><rect x="13.5" y="75.94" width="3.5" height="1" fill="#4a4a4a"/><rect x="13.5" y="82.43" width="3.5" height="1" fill="#4a4a4a"/><rect x="10.2" y="88.91" width="6.8" height="1" fill="#4a4a4a"/><text x="0" y="0" transform="translate(7 89.41) rotate(-90)" font-size="7.6" text-anchor="middle" fill="#555" font-family="Liberation Sans">-200</text><rect x="13.5" y="95.39" width="3.5" height="1" fill="#4a4a4a"/><rect x="13.5" y="101.88" width="3.5" height="1" fill="#4a4a4a"/><rect x="13.5" y="108.36" width="3.5" height="1" fill="#4a4a4a"/><rect x="13.5" y="114.85" width="3.5" height="1" fill="#4a4a4a"/><rect x="10.2" y="121.33" width="6.8" height="1" fill="#4a4a4a"/><text x="0" y="0" transform="translate(7 121.83) rotate(-90)" font-size="7.6" text-anchor="middle" fill="#555" font-family="Liberation Sans">-100</text><rect x="13.5" y="127.81" width="3.5" height="1" fill="#4a4a4a"/><rect x="13.5" y="134.30" width="3.5" height="1" fill="#4a4a4a"/><rect x="13.5" y="140.78" width="3.5" height="1" fill="#4a4a4a"/><rect x="13.5" y="147.27" width="3.5" height="1" fill="#4a4a4a"/><rect x="10.2" y="153.75" width="6.8" height="1" fill="#4a4a4a"/><text x="0" y="0" transform="translate(7 154.25) rotate(-90)" font-size="7.6" text-anchor="middle" fill="#555" font-family="Liberation Sans">0</text><rect x="13.5" y="160.23" width="3.5" height="1" fill="#4a4a4a"/><rect x="13.5" y="166.72" width="3.5" height="1" fill="#4a4a4a"/><rect x="13.5" y="173.20" width="3.5" height="1" fill="#4a4a4a"/><rect x="13.5" y="179.69" width="3.5" height="1" fill="#4a4a4a"/><rect x="10.2" y="186.17" width="6.8" height="1" fill="#4a4a4a"/><text x="0" y="0" transform="translate(7 186.67) rotate(-90)" font-size="7.6" text-anchor="middle" fill="#555" font-family="Liberation Sans">100</text><rect x="13.5" y="192.65" width="3.5" height="1" fill="#4a4a4a"/><rect x="13.5" y="199.14" width="3.5" height="1" fill="#4a4a4a"/><rect x="13.5" y="205.62" width="3.5" height="1" fill="#4a4a4a"/><rect x="13.5" y="212.11" width="3.5" height="1" fill="#4a4a4a"/><rect x="10.2" y="218.59" width="6.8" height="1" fill="#4a4a4a"/><text x="0" y="0" transform="translate(7 219.09) rotate(-90)" font-size="7.6" text-anchor="middle" fill="#555" font-family="Liberation Sans">200</text><rect x="13.5" y="225.07" width="3.5" height="1" fill="#4a4a4a"/><rect x="13.5" y="231.56" width="3.5" height="1" fill="#4a4a4a"/><rect x="13.5" y="238.04" width="3.5" height="1" fill="#4a4a4a"/><rect x="13.5" y="244.53" width="3.5" height="1" fill="#4a4a4a"/><rect x="10.2" y="251.01" width="6.8" height="1" fill="#4a4a4a"/><text x="0" y="0" transform="translate(7 251.51) rotate(-90)" font-size="7.6" text-anchor="middle" fill="#555" font-family="Liberation Sans">300</text><rect x="13.5" y="257.49" width="3.5" height="1" fill="#4a4a4a"/><rect x="13.5" y="263.98" width="3.5" height="1" fill="#4a4a4a"/><rect x="13.5" y="270.46" width="3.5" height="1" fill="#4a4a4a"/><rect x="13.5" y="276.95" width="3.5" height="1" fill="#4a4a4a"/><rect x="10.2" y="283.43" width="6.8" height="1" fill="#4a4a4a"/><text x="0" y="0" transform="translate(7 283.93) rotate(-90)" font-size="7.6" text-anchor="middle" fill="#555" font-family="Liberation Sans">400</text><rect x="13.5" y="289.91" width="3.5" height="1" fill="#4a4a4a"/><rect x="13.5" y="296.40" width="3.5" height="1" fill="#4a4a4a"/><rect x="13.5" y="302.88" width="3.5" height="1" fill="#4a4a4a"/><rect x="13.5" y="309.37" width="3.5" height="1" fill="#4a4a4a"/><rect x="10.2" y="315.85" width="6.8" height="1" fill="#4a4a4a"/><text x="0" y="0" transform="translate(7 316.35) rotate(-90)" font-size="7.6" text-anchor="middle" fill="#555" font-family="Liberation Sans">500</text><rect x="13.5" y="322.33" width="3.5" height="1" fill="#4a4a4a"/><rect x="13.5" y="328.82" width="3.5" height="1" fill="#4a4a4a"/><rect x="13.5" y="335.30" width="3.5" height="1" fill="#4a4a4a"/><rect x="13.5" y="341.79" width="3.5" height="1" fill="#4a4a4a"/><rect x="10.2" y="348.27" width="6.8" height="1" fill="#4a4a4a"/><text x="0" y="0" transform="translate(7 348.77) rotate(-90)" font-size="7.6" text-anchor="middle" fill="#555" font-family="Liberation Sans">600</text><rect x="13.5" y="354.75" width="3.5" height="1" fill="#4a4a4a"/><rect x="13.5" y="361.24" width="3.5" height="1" fill="#4a4a4a"/><rect x="13.5" y="367.72" width="3.5" height="1" fill="#4a4a4a"/><rect x="13.5" y="374.21" width="3.5" height="1" fill="#4a4a4a"/><rect x="10.2" y="380.69" width="6.8" height="1" fill="#4a4a4a"/><text x="0" y="0" transform="translate(7 381.19) rotate(-90)" font-size="7.6" text-anchor="middle" fill="#555" font-family="Liberation Sans">700</text><rect x="13.5" y="387.17" width="3.5" height="1" fill="#4a4a4a"/><rect x="13.5" y="393.66" width="3.5" height="1" fill="#4a4a4a"/><rect x="13.5" y="400.14" width="3.5" height="1" fill="#4a4a4a"/><rect x="13.5" y="406.63" width="3.5" height="1" fill="#4a4a4a"/><rect x="10.2" y="413.11" width="6.8" height="1" fill="#4a4a4a"/><text x="0" y="0" transform="translate(7 413.61) rotate(-90)" font-size="7.6" text-anchor="middle" fill="#555" font-family="Liberation Sans">800</text><rect x="13.5" y="419.59" width="3.5" height="1" fill="#4a4a4a"/><rect x="13.5" y="426.08" width="3.5" height="1" fill="#4a4a4a"/><rect x="13.5" y="432.56" width="3.5" height="1" fill="#4a4a4a"/><rect x="13.5" y="439.05" width="3.5" height="1" fill="#4a4a4a"/><rect x="10.2" y="445.53" width="6.8" height="1" fill="#4a4a4a"/><text x="0" y="0" transform="translate(7 446.03) rotate(-90)" font-size="7.6" text-anchor="middle" fill="#555" font-family="Liberation Sans">900</text><rect x="13.5" y="452.01" width="3.5" height="1" fill="#4a4a4a"/><rect x="13.5" y="458.50" width="3.5" height="1" fill="#4a4a4a"/><rect x="13.5" y="464.98" width="3.5" height="1" fill="#4a4a4a"/><rect x="13.5" y="471.47" width="3.5" height="1" fill="#4a4a4a"/><rect x="10.2" y="477.95" width="6.8" height="1" fill="#4a4a4a"/><text x="0" y="0" transform="translate(7 478.45) rotate(-90)" font-size="7.6" text-anchor="middle" fill="#555" font-family="Liberation Sans">1000</text><rect x="13.5" y="484.43" width="3.5" height="1" fill="#4a4a4a"/><rect x="13.5" y="490.92" width="3.5" height="1" fill="#4a4a4a"/><rect x="13.5" y="497.40" width="3.5" height="1" fill="#4a4a4a"/><rect x="13.5" y="503.89" width="3.5" height="1" fill="#4a4a4a"/><rect x="10.2" y="510.37" width="6.8" height="1" fill="#4a4a4a"/><text x="0" y="0" transform="translate(7 510.87) rotate(-90)" font-size="7.6" text-anchor="middle" fill="#555" font-family="Liberation Sans">1100</text><rect x="13.5" y="516.85" width="3.5" height="1" fill="#4a4a4a"/><rect x="13.5" y="523.34" width="3.5" height="1" fill="#4a4a4a"/><rect x="13.5" y="529.82" width="3.5" height="1" fill="#4a4a4a"/></svg>
<div class="a" style="left:758px;top:104px;width:1px;height:17px;background:#a9a9a9"></div>
<div class="a" style="left:32px;top:622.5px;width:15px;height:1px;background:#c4c4c4"></div>
<div class="a" style="left:32px;top:652px;width:1011px;height:1px;background:#cfcfcf"></div>
<div class="a" style="left:613.2px;top:275.4px;width:414.0px;height:259.1px;background:radial-gradient(ellipse 72% 72% at 50% 50%, #ffffff 0%, #ffffff 38%, #fef4f4 62%, #fde5e7 88%, #fbdadf 100%)"></div>
<svg class="a" style="left:682px;top:364px;" width="80" height="76" viewBox="0 0 80 76"><defs><linearGradient id="lgi" x1="0" y1="0" x2="1" y2="0"><stop offset="0" stop-color="#ee0f58"/><stop offset="1" stop-color="#f0205c"/></linearGradient></defs>
<g fill="none" stroke="url(#lgi)" stroke-linecap="round" stroke-linejoin="round">
<path d="M34.5 7.7 H29.3 Q21.3 7.7 21.1 15.7 Q20.3 31 21.3 46.2 Q21.6 54.2 29.3 54.2 H52.5 Q60.2 54.2 60.5 46.2 Q61.5 31 60.7 15.7 Q60.5 7.7 52.5 7.7 H47" stroke-width="4.3"/>
<path d="M40.7 56 Q41 67.6 52 67.6 Q72.5 67.6 72.5 52 Q72.5 44 64.6 41" stroke-width="4.1"/>
<path d="M16.9 40.7 Q7 44 7.4 53 Q8 63 27 67.6" stroke-width="4.1"/>
</g>
<path d="M28 22 Q27.7 13.7 36 13.7 H45 Q53.3 13.7 53.3 22 V34.5 Q53.3 42.8 45 42.8 H36 Q27.7 42.8 27.7 34.5 Z" fill="#f0125a"/>
<circle cx="40.7" cy="48" r="2.7" fill="#f0125a"/>
<circle cx="30.6" cy="68.6" r="3.2" fill="#fff" stroke="#ea165b" stroke-width="2.8"/></svg>
<svg class="a" style="left:770px;top:378px;" width="190" height="50" viewBox="0 0 190 50"><defs><linearGradient id="tg" gradientUnits="userSpaceOnUse" x1="9" y1="0" x2="181" y2="0"><stop offset="0" stop-color="#ee1058"/><stop offset="0.45" stop-color="#f42c5c"/><stop offset="1" stop-color="#f4626a"/></linearGradient></defs>
<g fill="none" stroke="url(#tg)" stroke-width="7" stroke-linecap="round" stroke-linejoin="round">
<path d="M12.4 21 V40.8"/>
<path d="M26.2 11.1 V41 H32.5 A15 14.95 0 0 0 32.5 11.1 Z"/>
<circle cx="68.2" cy="31" r="10.2"/>
<path d="M106.5 24.5 A10.2 10.2 0 1 0 106.5 37.5"/>
<path d="M120.3 11.3 V40.7 M115.7 20.6 H125.3"/>
<circle cx="144.5" cy="31" r="10.2"/>
<path d="M166.2 40.8 V31 Q166.2 20.6 177 20.6"/>
</g>
<circle cx="12.4" cy="10.8" r="3.7" fill="#ee1058"/></svg>
<svg class="a" style="left:607.2px;top:245.39999999999998px;" width="426.0" height="295.1" viewBox="0 0 426.0 295.1"><ellipse cx="213.00" cy="159.55" rx="207.00" ry="129.55" fill="none" stroke="#4a88d8" stroke-width="1"/>
<rect x="6" y="30" width="414.00" height="259.10" fill="none" stroke="#4f7db5" stroke-width="1.7"/>
<path d="M213.00 8.6 V30" stroke="#4a7fc0" stroke-width="1.6"/>
<circle cx="213.00" cy="5" r="3.6" fill="#fafcff" stroke="#3d7cd0" stroke-width="1.4"/>
<circle cx="6.00" cy="30.00" r="4.2" fill="#3b80d6" stroke="#e8f0fb" stroke-width="1.1"/><circle cx="6.00" cy="159.55" r="4.2" fill="#3b80d6" stroke="#e8f0fb" stroke-width="1.1"/><circle cx="6.00" cy="289.10" r="4.2" fill="#3b80d6" stroke="#e8f0fb" stroke-width="1.1"/><circle cx="213.00" cy="30.00" r="4.2" fill="#3b80d6" stroke="#e8f0fb" stroke-width="1.1"/><circle cx="213.00" cy="289.10" r="4.2" fill="#3b80d6" stroke="#e8f0fb" stroke-width="1.1"/><circle cx="420.00" cy="30.00" r="4.2" fill="#3b80d6" stroke="#e8f0fb" stroke-width="1.1"/><circle cx="420.00" cy="159.55" r="4.2" fill="#3b80d6" stroke="#e8f0fb" stroke-width="1.1"/><circle cx="420.00" cy="289.10" r="4.2" fill="#3b80d6" stroke="#e8f0fb" stroke-width="1.1"/></svg>
<div class="a" style="left:4.5px;top:87px;width:22px;height:21px;background:#dcdcdc;border:1px solid #d0d0d0;border-radius:2px"></div>
<svg class="a" style="left:11px;top:92px;" width="10" height="12" viewBox="0 0 10 12"><path d="M2 1 L2 10.5 L4.5 8.3 L6.5 11.5 L8 10.7 L6 7.5 L9 7.3 Z" fill="#111"/></svg>
<svg class="a" style="left:7px;top:112px;" width="16" height="17" viewBox="0 0 16 17"><rect x="1.5" y="1.5" width="13" height="14" fill="#c8e4f8" opacity="0.7"/><rect x="2.5" y="2.5" width="11" height="12" fill="none" stroke="#4d9be0" stroke-width="1.4" stroke-dasharray="1.5 0.9"/><rect x="4" y="5.5" width="8" height="6" fill="#fff"/><path d="M4 5.3 H12 M4 11.7 H12" stroke="#9a8068" stroke-width="1"/><path d="M0.8 0.8 l2.6 0.6 l-2 2z M15.2 0.8 l-2.6 0.6 l2 2z M0.8 16.2 l2.6 -0.6 l-2 -2z M15.2 16.2 l-2.6 -0.6 l2 -2z" fill="#3a88d8"/></svg>
<svg class="a" style="left:10px;top:137px;" width="12" height="12" viewBox="0 0 12 12"><path d="M2.5 1.5 L10 6.3 L2.5 10.5 Z" fill="#fff" stroke="#222" stroke-width="1.1" stroke-linejoin="round"/></svg>
<svg class="a" style="left:8px;top:158px;" width="16" height="16" viewBox="0 0 16 16"><path d="M2 2 L7 8 L14 5.5 M7 8 L5 14" fill="none" stroke="#4a6a80" stroke-width="1.2"/><circle cx="7" cy="8" r="2.2" fill="#6a8aa0"/><path d="M14.5 5.3l-2.5 -1.2v2.6z M5 15l-1-2.5h2z" fill="#333"/></svg>
<svg class="a" style="left:7px;top:180px;" width="17" height="16" viewBox="0 0 17 16"><path d="M3 14.5 L5 8 L10.5 3.5 L13 6 L8.5 11.5 Z" fill="#e8b040" stroke="#9a6818" stroke-width="0.8"/><path d="M3 14.5 L7.5 10" stroke="#6a4010" stroke-width="0.7"/><path d="M11 2.5 L14.5 1.5 L15.5 4.5 L13.5 6.5Z" fill="#c83a4a"/></svg>
<svg class="a" style="left:7px;top:202px;" width="17" height="17" viewBox="0 0 17 17"><path d="M3 14 L4.5 10.5 L13 2.5 L15 4.5 L6.5 12.5 Z" fill="#3d8ed8" stroke="#2a64a8" stroke-width="0.7"/><path d="M13 2.5 L15 4.5 L16 3.5 L14 1.5Z" fill="#e89090"/><path d="M3 14 L4.5 12" stroke="#222" stroke-width="1"/><path d="M7 15 Q10 11 12 14 T16 14" fill="none" stroke="#888" stroke-width="0.7"/></svg>
<svg class="a" style="left:7px;top:225px;" width="17" height="17" viewBox="0 0 17 17"><path d="M3 12 Q5 7 9.5 8 L12.5 5 L14 6.5 L11 9.5 Q11.5 13 5.5 13Z" fill="#9a5a2a"/><circle cx="14" cy="3.5" r="2.2" fill="#e86080"/><path d="M1.5 13.5 Q6 16 9 14 T16 14" fill="none" stroke="#3a5a90" stroke-width="1"/></svg>
<svg class="a" style="left:8px;top:249px;" width="15" height="15" viewBox="0 0 15 15"><defs><linearGradient id="cw1" x1="0" y1="0" x2="1" y2="1"><stop offset="0" stop-color="#e83070"/><stop offset="0.35" stop-color="#a040c0"/><stop offset="0.6" stop-color="#3aa0e0"/><stop offset="1" stop-color="#70c030"/></linearGradient><linearGradient id="cw2" x1="1" y1="0" x2="0" y2="1"><stop offset="0" stop-color="#f0a030" stop-opacity="0.9"/><stop offset="0.5" stop-color="#f0d030" stop-opacity="0"/></linearGradient></defs><circle cx="7.3" cy="7.5" r="6.6" fill="url(#cw1)"/><circle cx="7.3" cy="7.5" r="6.6" fill="url(#cw2)"/><circle cx="7.3" cy="7.5" r="2.3" fill="#fff"/><path d="M7.3 7.5 L13.5 1.5" stroke="#444" stroke-width="1.1"/></svg>
<svg class="a" style="left:10px;top:272px;" width="12" height="15" viewBox="0 0 12 15"><path d="M2 1.5 Q2 8 6 8.5 Q10 8 10 1.5" fill="#e8f0fa" stroke="#2a4a70" stroke-width="1.1"/><path d="M6 8.5 V13 M3 13.3 H9" stroke="#2a4a70" stroke-width="1.1"/></svg>
<svg class="a" style="left:7px;top:295px;" width="17" height="14" viewBox="0 0 17 14"><rect x="1" y="1" width="15" height="11.5" fill="#1e5a9a"/><rect x="1" y="1" width="15" height="6" fill="#6aaee8"/><path d="M1 10 L6 6 L10 8 L16 5 V12.5 H1Z" fill="#0e2a50"/><circle cx="12.5" cy="3.5" r="1.5" fill="#f0d060"/></svg>
<svg class="a" style="left:8px;top:317px;" width="15" height="15" viewBox="0 0 15 15"><path d="M3.5 1 V11.5 H14 M1 3.5 H11.5 V14 M3.5 11.5 L11.5 3.5" fill="none" stroke="#333" stroke-width="1.2"/></svg>
<svg class="a" style="left:9.5px;top:341px;" width="12" height="12" viewBox="0 0 12 12"><defs><linearGradient id="bl1" x1="0" y1="0" x2="0" y2="1"><stop offset="0" stop-color="#4aa0e8"/><stop offset="1" stop-color="#2070c8"/></linearGradient></defs><rect x="0.3" y="0.5" width="11.3" height="11.2" fill="url(#bl1)"/></svg>
<svg class="a" style="left:9px;top:363.5px;" width="13" height="13" viewBox="0 0 13 13"><circle cx="6.3" cy="6.2" r="5.9" fill="url(#bl1)"/></svg>
<svg class="a" style="left:9.5px;top:386.5px;" width="12" height="12" viewBox="0 0 12 12"><rect x="0.3" y="0.5" width="11.3" height="11.4" rx="2.5" fill="url(#bl1)"/></svg>
<svg class="a" style="left:8px;top:408px;" width="19" height="19" viewBox="0 0 19 19"><path d="M7.3 0.7 L14 5.4 L11.6 12.8 H3 L0.7 5.4Z" fill="url(#bl1)"/><path d="M14.6 17.6 H17.8 V14.4Z" fill="#111"/></svg>
<div class="a" style="left:8.9px;top:430.5px;width:13px;height:14px;background:#fafafa"></div>
<div class="t" style="left:10.20px;top:430.87px;font-size:13.5px;color:#222;font-family:'Liberation Serif',serif;">T</div>
<svg class="a" style="left:22px;top:443px;" width="5" height="6" viewBox="0 0 5 6"><path d="M0.6 5 H3.8 V1.8Z" fill="#111"/></svg>
<svg class="a" style="left:8px;top:452px;" width="16" height="17" viewBox="0 0 16 17"><path d="M1.5 15.5 L2 13 L9 6 L11 8 L4 15Z" fill="#e8eef4" stroke="#888" stroke-width="0.6"/><path d="M9 4.5 L12.5 8" stroke="#555" stroke-width="1.2"/><ellipse cx="12.3" cy="4.5" rx="3" ry="3.4" transform="rotate(45 12.3 4.5)" fill="#c89a40" stroke="#8a6020" stroke-width="0.6"/></svg>
<svg class="a" style="left:8px;top:475px;" width="15" height="17" viewBox="0 0 15 17"><path d="M3 9 V4 Q3 3 4 3 Q5 3 5 4 V8 V2 Q5 1 6 1 Q7 1 7 2 V8 V1.8 Q7 0.8 8 0.8 Q9 0.8 9 1.8 V8 V3 Q9 2 10 2 Q11 2 11 3 V9.5 L12.5 7.5 Q13.5 6.5 14.3 7.3 Q14.8 8 14 9 L11 14 Q9.5 16 7 16 Q3 16 3 12Z" fill="#f5b080" stroke="#d08050" stroke-width="0.6"/></svg>
<svg class="a" style="left:8px;top:498px;" width="15" height="16" viewBox="0 0 15 16"><path d="M9 9.5 L13.5 14" stroke="#a07040" stroke-width="2.4" stroke-linecap="round"/><circle cx="6" cy="6.3" r="5" fill="#8cc4f0" stroke="#3a7ab8" stroke-width="1.2"/><path d="M3.5 5 Q4.5 3 6.5 3" stroke="#fff" stroke-width="0.9" fill="none"/></svg>
<div class="a" style="left:1048.5px;top:274px;width:5px;height:175px;background:#a3a3a3;border-radius:3px"></div>
<svg class="a" style="left:1046px;top:107px;" width="10" height="8" viewBox="0 0 10 8"><path d="M1 7 L5 1 L9 7Z" fill="#a8a8a8"/></svg>
<svg class="a" style="left:1046px;top:641px;" width="10" height="8" viewBox="0 0 10 8"><path d="M1 1 L5 7 L9 1Z" fill="#a8a8a8"/></svg>
<div class="a" style="left:172.5px;top:657.5px;width:335.5px;height:5.5px;background:#a3a3a3;border-radius:3px"></div>
<svg class="a" style="left:36px;top:655px;" width="8" height="10" viewBox="0 0 8 10"><path d="M7 1 L1 5 L7 9Z" fill="#a8a8a8"/></svg>
<svg class="a" style="left:1032px;top:655px;" width="8" height="10" viewBox="0 0 8 10"><path d="M1 1 L7 5 L1 9Z" fill="#a8a8a8"/></svg>
<div class="t" style="left:3.75px;top:673.79px;font-size:9.7px;color:#333;letter-spacing:0.041px;word-spacing:-0.041px;">Выбрано: 'Эллипс'. Чтобы переместить выделенное, используйте</div>
<div class="t" style="left:305.50px;top:673.79px;font-size:9.7px;color:#111;font-weight:bold;letter-spacing:0.108px;">Перетащите</div>
<div class="t" style="left:364.50px;top:673.79px;font-size:9.7px;color:#333;letter-spacing:0.174px;word-spacing:-0.174px;">. Чтобы выбрать другой объект, используйте</div>
<div class="t" style="left:574.70px;top:673.79px;font-size:9.7px;color:#111;font-weight:bold;letter-spacing:0.312px;">Нажмите</div>
<div class="t" style="left:619.40px;top:673.79px;font-size:9.7px;color:#333;letter-spacing:0.104px;word-spacing:-0.104px;">. Чтобы отменить выделение, нажмите</div>
<div class="t" style="left:801.25px;top:673.79px;font-size:9.7px;color:#111;font-weight:bold;letter-spacing:0.319px;">Нажмите</div>
<div class="t" style="left:849.00px;top:673.79px;font-size:9.7px;color:#333;letter-spacing:0.062px;word-spacing:-0.062px;">на пустой области.</div>
<div class="a" style="left:141px;top:689.5px;width:38.5px;height:29px;background:linear-gradient(rgba(255,255,255,0.30),rgba(255,255,255,0.10));border:1px solid rgba(255,255,255,0.32);border-radius:2px"></div>
<div class="a" style="left:188px;top:689.5px;width:39px;height:29px;background:linear-gradient(rgba(255,255,255,0.30),rgba(255,255,255,0.10));border:1px solid rgba(255,255,255,0.32);border-radius:2px"></div>
<div class="a" style="left:229px;top:690px;width:1px;height:28px;background:rgba(255,255,255,0.15)"></div>
<div class="a" style="left:231px;top:690px;width:1px;height:28px;background:rgba(255,255,255,0.15)"></div>
<div class="a" style="left:375px;top:689.5px;width:43px;height:29px;background:linear-gradient(rgba(255,255,255,0.30),rgba(255,255,255,0.10));border:1px solid rgba(255,255,255,0.32);border-radius:2px"></div>
<div class="a" style="left:421px;top:689.5px;width:43.5px;height:29px;background:linear-gradient(#f0b040,#d88a20);border:1px solid #f5c060;border-radius:2px"></div>
<div class="a" style="left:468px;top:689.5px;width:43px;height:29px;background:linear-gradient(rgba(255,255,255,0.30),rgba(255,255,255,0.10));border:1px solid rgba(255,255,255,0.32);border-radius:2px"></div>
<div class="a" style="left:515px;top:689.5px;width:43px;height:29px;background:linear-gradient(rgba(255,255,255,0.30),rgba(255,255,255,0.10));border:1px solid rgba(255,255,255,0.32);border-radius:2px"></div>
<div class="a" style="left:561px;top:689.5px;width:44px;height:29px;background:linear-gradient(rgba(255,255,255,0.35),rgba(255,255,255,0.18));border:1px solid rgba(255,255,255,0.4);border-radius:2px"></div>
<svg class="a" style="left:6px;top:689px;" width="32" height="31" viewBox="0 0 32 31"><defs><radialGradient id="orb" cx="0.5" cy="0.35" r="0.6"><stop offset="0" stop-color="#7ad0f0"/><stop offset="0.6" stop-color="#1a6aa8"/><stop offset="1" stop-color="#0a3a68"/></radialGradient></defs>
<circle cx="16" cy="15.5" r="14.5" fill="url(#orb)" stroke="#a8d0e8" stroke-width="1.2"/><ellipse cx="16" cy="9" rx="9" ry="5" fill="#fff" opacity="0.18"/>
<path d="M8 9 Q11 7.5 15 9 L14 14.5 Q10.5 13 7 14.5Z" fill="#f05a28"/><path d="M16 9 Q19.5 10.5 23.5 9 L22.5 14.5 Q18.5 16 15 14.5Z" fill="#7ac030"/>
<path d="M7 15.5 Q10.5 14 14 15.5 L13 21 Q9.5 19.5 6 21Z" fill="#2a9ae8"/><path d="M15 15.5 Q18.5 17 22.5 15.5 L21.5 21 Q17.5 22.5 14 21Z" fill="#f8c020"/></svg>
<svg class="a" style="left:56px;top:691px;" width="28" height="27" viewBox="0 0 28 27"><defs><linearGradient id="ieg" x1="0" y1="0" x2="0" y2="1"><stop offset="0" stop-color="#6ac8f8"/><stop offset="1" stop-color="#1a6ac8"/></linearGradient></defs><circle cx="14.5" cy="14" r="6.8" fill="none" stroke="url(#ieg)" stroke-width="4"/><rect x="9" y="12.6" width="11" height="2.6" fill="#2a88e0"/><rect x="17" y="15.5" width="6" height="3.5" fill="#223344" opacity="0"/><path d="M19 16.5 L23 16.5" stroke="#1e2c3a" stroke-width="2.6"/><path d="M5 23.5 Q1 19 8 10 Q17 0 24.5 2.5 Q28 4 24 10" fill="none" stroke="#e8b830" stroke-width="2.2"/></svg>
<svg class="a" style="left:103px;top:693px;" width="24" height="24" viewBox="0 0 24 24"><rect x="1" y="1" width="21.5" height="21.5" fill="#6ab8e8"/><rect x="2" y="2" width="19.5" height="19.5" fill="#8ccaf0"/><circle cx="11.5" cy="11.5" r="7.5" fill="#f07820"/><path d="M9 7.5 L15.5 11.5 L9 15.5Z" fill="#fff"/></svg>
<svg class="a" style="left:145px;top:691px;" width="32" height="26" viewBox="0 0 32 26"><path d="M7 20 L15 3 L27 6 L21 23Z" fill="#e8eef0"/><path d="M5 19 L12 4 L24 7 L18 22Z" fill="#50b8d8"/><path d="M5 19 L12 4 L18 5.5 L11 20.5Z" fill="#80d0e8"/></svg>
<svg class="a" style="left:191px;top:692px;" width="32" height="25" viewBox="0 0 32 25"><path d="M4 5 H12 L14 7 H28 V21 H4Z" fill="#e8c040"/><rect x="6" y="4" width="20" height="8" fill="#fff"/><path d="M3 10 H29 L27.5 22 H4.5Z" fill="#f8d860"/><rect x="9" y="15" width="14" height="4" fill="#4a9ae0"/></svg>
<svg class="a" style="left:244px;top:691px;" width="24" height="26" viewBox="0 0 24 26"><path d="M12 2 L18 20 H6Z" fill="#e8e8e8"/><path d="M9 10 H15 M8 14 H16" stroke="#60a0d0" stroke-width="1.5"/><ellipse cx="12" cy="21" rx="9" ry="3" fill="#4a80b0"/><circle cx="17" cy="17" r="4.5" fill="#e09050"/></svg>
<div class="a" style="left:291px;top:691px;width:24.5px;height:23.5px;background:#001d26;border:1.6px solid #31c5f0"></div>
<div class="t" style="left:295.30px;top:697.87px;font-size:13.5px;color:#31c5f0;letter-spacing:0.117px;">Ps</div>
<div class="a" style="left:337.5px;top:691px;width:24.5px;height:23.5px;background:#0a1a4a;border:1.6px solid #a8c8f8"></div>
<div class="t" style="left:341.60px;top:697.87px;font-size:13.5px;color:#b8d4ff;letter-spacing:0.117px;">Ps</div>
<svg class="a" style="left:383px;top:691px;" width="26" height="26" viewBox="0 0 26 26"><circle cx="13" cy="13" r="12" fill="#db4437"/><path d="M13 13 L2.6 7 A12 12 0 0 0 13 25Z" fill="#0f9d58"/><path d="M13 13 L23.4 7 A12 12 0 0 1 13 25Z" fill="#f4b400"/><path d="M13 13 L13 25 A12 12 0 0 1 2.6 7Z" fill="#0f9d58"/><circle cx="13" cy="13" r="5.6" fill="#fff"/><circle cx="13" cy="13" r="4.4" fill="#4285f4"/></svg>
<svg class="a" style="left:430px;top:691px;" width="27" height="27" viewBox="0 0 27 27"><circle cx="12.5" cy="12.5" r="11" fill="#00aff0"/><path d="M16.5 8.5 Q15 6.5 12.5 6.5 Q9 6.5 9 9 Q9 11.5 12.5 12 Q16 12.5 16 15 Q16 18 12.5 18 Q9.5 18 8.5 16" fill="none" stroke="#fff" stroke-width="2.2"/><circle cx="22" cy="22" r="4.3" fill="#f8a020" stroke="#fff" stroke-width="0.6"/><text x="22" y="24.6" font-size="6.5" text-anchor="middle" fill="#222" font-family="Liberation Sans" font-weight="bold">1</text></svg>
<svg class="a" style="left:475px;top:692px;" width="30" height="25" viewBox="0 0 30 25"><rect x="3" y="3" width="24" height="19" fill="#2a70b8"/><rect x="5" y="5" width="20" height="15" fill="#b8d8e0"/><path d="M5 15 Q12 9 25 13 V20 H5Z" fill="#406850"/><path d="M2 2h5M2 2v5M28 2h-5M28 2v5M2 23h5M2 23v-5M28 23h-5M28 23v-5" stroke="#4aa0e8" stroke-width="1.2"/></svg>
<svg class="a" style="left:523px;top:691px;" width="30" height="27" viewBox="0 0 30 27"><circle cx="13" cy="13" r="11.5" fill="#2fa0da"/><path d="M6 12.5 L19 7.5 L16.5 19 L12 15.5 L10 17.5 L10.2 14 L17 9 L9 13.5Z" fill="#fff"/><rect x="15.5" y="17.5" width="13" height="8" rx="1" fill="#e03050"/><text x="22" y="24.3" font-size="6.5" text-anchor="middle" fill="#fff" font-family="Liberation Sans">.07</text></svg>
<svg class="a" style="left:569px;top:691px;" width="28" height="26" viewBox="0 0 28 26"><defs><linearGradient id="af2" x1="0" y1="0" x2="1" y2="1"><stop offset="0" stop-color="#40d0f8"/><stop offset="1" stop-color="#1060c8"/></linearGradient></defs><path d="M14 3 L25 21 L3 21Z" fill="url(#af2)" stroke="#1a58b0" stroke-width="2.2" stroke-linejoin="round"/><path d="M14 8 L8 18 L21 18" fill="none" stroke="#0a3068" stroke-width="1.5"/><circle cx="11.5" cy="15" r="1.8" fill="#60f0a0"/></svg>
<div class="t" style="left:1101.00px;top:698.16px;font-size:9.5px;color:#fff;letter-spacing:-0.102px;">EN</div>
<svg class="a" style="left:1127px;top:700px;" width="9" height="7" viewBox="0 0 9 7"><path d="M1 6 L4.5 1.5 L8 6Z" fill="#fff"/></svg>
<svg class="a" style="left:1147px;top:698px;" width="16" height="15" viewBox="0 0 16 15"><path d="M2 1 V14" stroke="#ddd" stroke-width="1.2"/><path d="M2.5 1.5 H11 V9 H2.5Z" fill="#f4f4f4"/><circle cx="11.5" cy="10.5" r="3.5" fill="#d82020"/><path d="M9.8 8.8l3.4 3.4M13.2 8.8l-3.4 3.4" stroke="#fff" stroke-width="1"/></svg>
<svg class="a" style="left:1167px;top:698px;" width="16" height="15" viewBox="0 0 16 15"><rect x="1" y="1" width="4" height="10" fill="#ccc"/><rect x="5" y="4" width="10" height="7" fill="none" stroke="#eee" stroke-width="1.2"/><path d="M10 11v2M6 13.5h8" stroke="#eee" stroke-width="1.2"/></svg>
<svg class="a" style="left:1187px;top:698px;" width="15" height="15" viewBox="0 0 15 15"><path d="M1 5 H4 L8 1.5 V13.5 L4 10 H1Z" fill="#eee"/><path d="M10 5 Q11.5 7.5 10 10M12 3.5 Q14.5 7.5 12 11.5" fill="none" stroke="#ccc" stroke-width="0.9"/></svg>
<div class="t" style="left:1226.60px;top:693.26px;font-size:9.5px;color:#fff;letter-spacing:-0.176px;">13:20</div>
<div class="t" style="left:1214.00px;top:707.96px;font-size:9.5px;color:#fff;letter-spacing:-0.085px;">06.01.2018</div>
<div class="a" style="left:1270px;top:689px;width:10px;height:31px;background:linear-gradient(90deg,#33424e,#25323d);border-left:1px solid #4a5864"></div>
<div class="a" style="left:1059px;top:84px;width:221px;height:19.5px;background:#c2c2c2"></div>
<div class="a" style="left:1065px;top:90px;width:1px;height:7.5px;background:#b2b2b2"></div>
<div class="a" style="left:1102px;top:84px;width:47.299999999999955px;height:20.5px;background:#efefef"></div>
<div class="t" style="left:1078.30px;top:89.44px;font-size:8.7px;color:#555;">Цвет</div>
<div class="t" style="left:1106.00px;top:89.44px;font-size:8.7px;color:#2a2a2a;letter-spacing:0.283px;">Образцы</div>
<div class="t" style="left:1152.90px;top:89.44px;font-size:8.7px;color:#555;letter-spacing:0.143px;">Обводка</div>
<div class="t" style="left:1197.80px;top:89.44px;font-size:8.7px;color:#555;letter-spacing:0.021px;">Кисти</div>
<div class="a" style="left:1193.6px;top:89px;width:1px;height:10.5px;background:#a4a4a4"></div>
<svg class="a" style="left:1264px;top:88px;" width="14" height="12" viewBox="0 0 14 12"><rect x="2" y="2.5" width="6.5" height="5.5" fill="#888"/><path d="M2 4h6.5M2 6h6.5" stroke="#aaa" stroke-width="0.6"/><rect x="10" y="8" width="2" height="1.2" fill="#666"/></svg>
<div class="a" style="left:1059px;top:104px;width:221px;height:50.4px;background:#efefef"></div>
<svg class="a" style="left:1070px;top:112px;" width="40" height="40" viewBox="0 0 40 40"><circle cx="12.5" cy="15.7" r="7.2" fill="none" stroke="#000" stroke-width="4.2"/>
<circle cx="23" cy="26.4" r="9.6" fill="#fff" stroke="#9a9a9a" stroke-width="1"/>
<circle cx="7.9" cy="31.8" r="4.6" fill="#fff" stroke="#888" stroke-width="0.9"/><path d="M5 35 L11 28.5" stroke="#e04050" stroke-width="1.2"/>
<path d="M25 7.8 Q30.5 8 31.3 13.8" fill="none" stroke="#444" stroke-width="0.9"/><path d="M23.5 7.8 l2.6 -1.8 v3.6z M31.3 15.3 l-1.8 -2.6 h3.6z" fill="#444"/></svg>
<svg class="a" style="left:1110px;top:115px;" width="18" height="18" viewBox="0 0 18 18"><path d="M2 16 L3 13.5 L10 6.5 L11.5 8 L4.5 15Z" fill="#eef2f6" stroke="#8a8a8a" stroke-width="0.6"/><path d="M10 5 L13 8" stroke="#6a5030" stroke-width="1.3"/><ellipse cx="13" cy="5" rx="2.6" ry="3.2" transform="rotate(45 13 5)" fill="#c8983e" stroke="#8a6020" stroke-width="0.5"/></svg>
<svg class="a" style="left:1126px;top:115px;" width="16" height="16" viewBox="0 0 16 16"><circle cx="7.8" cy="8.3" r="6" fill="#f40000"/></svg>
<div class="t" style="left:1151.90px;top:127.38px;font-size:9px;color:#353535;letter-spacing:0.025px;">Непрозрачность:</div>
<div class="a" style="left:1226.6px;top:123px;width:49.4px;height:16px;background:#fff;border:1px solid #cfcfcf;border-radius:2px"></div>
<div class="t" style="left:1230.50px;top:127.18px;font-size:9px;color:#353535;letter-spacing:-0.758px;word-spacing:0.758px;">100 %</div>
<svg class="a" style="left:1266px;top:128px;" width="8" height="5" viewBox="0 0 8 5"><path d="M0.5 0.5h6l-3 3.5z" fill="#111"/></svg>
<div class="t" style="left:1063.00px;top:161.78px;font-size:9px;color:#444;letter-spacing:-0.140px;">Недавние:</div>
<div class="a" style="left:1112.8px;top:160.6px;width:121.8px;height:12.2px;background:#ececec"></div>
<div class="a" style="left:1112.8px;top:160.6px;width:11.2px;height:12.2px;background:#fff"></div>
<div class="a" style="left:1125.2px;top:160.6px;width:10.7px;height:12.2px;background:linear-gradient(135deg,#d8185a,#f05a70)"></div>
<div class="a" style="left:1137px;top:160.6px;width:11.1px;height:12.2px;background:#d21a5a"></div>
<div class="a" style="left:1063.3px;top:177.2px;width:129.7px;height:16.1px;background:#fff;border:1px solid #cfcfcf;border-radius:2px"></div>
<svg class="a" style="left:1067px;top:179px;" width="14" height="13" viewBox="0 0 14 13"><path d="M6.7 2.2 L11.6 10.3 H1.9Z" fill="none" stroke="#111" stroke-width="2.1" stroke-linejoin="round"/></svg>
<div class="t" style="left:1084.10px;top:181.28px;font-size:9px;color:#353535;letter-spacing:0.046px;word-spacing:-0.046px;">Оттенки серого</div>
<svg class="a" style="left:1183px;top:183px;" width="8" height="5" viewBox="0 0 8 5"><path d="M0.5 0.5h6l-3 3.5z" fill="#111"/></svg>
<svg class="a" style="left:1196px;top:177px;" width="14" height="14" viewBox="0 0 14 14"><path d="M11.5 4 A5.6 5.6 0 1 0 11.5 10" fill="none" stroke="#aaa" stroke-width="3.2"/><circle cx="4" cy="6" r="0.9" fill="#777"/><circle cx="6.5" cy="3.2" r="0.9" fill="#777"/><circle cx="4.5" cy="9.5" r="0.9" fill="#777"/></svg>
<div class="a" style="left:1223.75px;top:177px;width:10.5px;height:12px;background:#fff"></div>
<svg class="a" style="left:1223.75px;top:177px;" width="11" height="12" viewBox="0 0 11 12"><path d="M0.5 11 L10.5 1" stroke="#e84050" stroke-width="1.3"/></svg>
<div class="a" style="left:1235.5px;top:177px;width:11px;height:12px;background:#000"></div>
<div class="a" style="left:1247.5px;top:177px;width:10.5px;height:12px;background:#808080"></div>
<div class="a" style="left:1258.5px;top:177px;width:11.5px;height:12px;background:#fff"></div>
<div class="a" style="left:1063.3px;top:201.1px;width:210.06px;height:11.9px;background:#f3f3f3"></div>
<div class="a" style="left:1063.3px;top:213px;width:58.35px;height:11.6px;background:#f3f3f3"></div>
<div class="a" style="left:1063.3px;top:201.1px;width:10.8px;height:11.2px;background:#fff"></div>
<svg class="a" style="left:1063.3px;top:201.1px;" width="12" height="12" viewBox="0 0 12 12"><path d="M0.5 11 L10.5 0.8" stroke="#e84050" stroke-width="1.3"/></svg>
<div class="a" style="left:1074.97px;top:201.1px;width:10.8px;height:11.2px;background:#fff"></div>
<svg class="a" style="left:1074.97px;top:201.1px;" width="12" height="12" viewBox="0 0 12 12"><path d="M0.5 11 L10.5 0.8" stroke="#e84050" stroke-width="1.3"/></svg>
<div class="a" style="left:1086.64px;top:201.1px;width:10.8px;height:11.2px;background:#000000"></div>
<div class="a" style="left:1098.31px;top:201.1px;width:10.8px;height:11.2px;background:#111111"></div>
<div class="a" style="left:1109.98px;top:201.1px;width:10.8px;height:11.2px;background:#1c1c1c"></div>
<div class="a" style="left:1121.65px;top:201.1px;width:10.8px;height:11.2px;background:#262626"></div>
<div class="a" style="left:1133.32px;top:201.1px;width:10.8px;height:11.2px;background:#333333"></div>
<div class="a" style="left:1144.99px;top:201.1px;width:10.8px;height:11.2px;background:#404040"></div>
<div class="a" style="left:1156.66px;top:201.1px;width:10.8px;height:11.2px;background:#4d4d4d"></div>
<div class="a" style="left:1168.33px;top:201.1px;width:10.8px;height:11.2px;background:#595959"></div>
<div class="a" style="left:1180.0px;top:201.1px;width:10.8px;height:11.2px;background:#666666"></div>
<div class="a" style="left:1191.67px;top:201.1px;width:10.8px;height:11.2px;background:#737373"></div>
<div class="a" style="left:1203.34px;top:201.1px;width:10.8px;height:11.2px;background:#808080"></div>
<div class="a" style="left:1215.01px;top:201.1px;width:10.8px;height:11.2px;background:#8c8c8c"></div>
<div class="a" style="left:1226.68px;top:201.1px;width:10.8px;height:11.2px;background:#999999"></div>
<div class="a" style="left:1238.35px;top:201.1px;width:10.8px;height:11.2px;background:#a6a6a6"></div>
<div class="a" style="left:1250.02px;top:201.1px;width:10.8px;height:11.2px;background:#b3b3b3"></div>
<div class="a" style="left:1261.69px;top:201.1px;width:10.8px;height:11.2px;background:#bfbfbf"></div>
<div class="a" style="left:1063.3px;top:213.4px;width:10.8px;height:11px;background:#cccccc"></div>
<div class="a" style="left:1074.97px;top:213.4px;width:10.8px;height:11px;background:#d5d5d5"></div>
<div class="a" style="left:1086.64px;top:213.4px;width:10.8px;height:11px;background:#e5e5e5"></div>
<div class="a" style="left:1098.31px;top:213.4px;width:10.8px;height:11px;background:#efefef"></div>
<div class="a" style="left:1109.98px;top:213.4px;width:10.8px;height:11px;background:#ffffff"></div>
<div class="a" style="left:1066px;top:300.6px;width:149px;height:16.6px;background:#f0f0f0;border:1px solid #c9c9c9;border-radius:2px"></div>
<svg class="a" style="left:1066px;top:302px;" width="13" height="13" viewBox="0 0 13 13"><circle cx="5.4" cy="5.6" r="3.6" fill="none" stroke="#222" stroke-width="1.2"/><path d="M8 8.3 L11.3 11.5" stroke="#222" stroke-width="1.4"/></svg>
<div class="a" style="left:1059px;top:323.2px;width:221px;height:18.900000000000034px;background:#c2c2c2"></div>
<div class="a" style="left:1065px;top:329.2px;width:1px;height:6.900000000000034px;background:#b2b2b2"></div>
<div class="a" style="left:1073.9px;top:323.2px;width:30.0px;height:19.900000000000034px;background:#efefef"></div>
<div class="t" style="left:1077.80px;top:328.24px;font-size:8.7px;color:#2a2a2a;letter-spacing:-0.010px;">Слои</div>
<div class="t" style="left:1107.80px;top:328.24px;font-size:8.7px;color:#555;letter-spacing:-0.226px;">Стили</div>
<div class="t" style="left:1140.00px;top:328.24px;font-size:8.7px;color:#555;letter-spacing:-0.214px;">Эффекты</div>
<div class="t" style="left:1186.00px;top:328.24px;font-size:8.7px;color:#555;">Стили текста</div>
<div class="a" style="left:1136.3px;top:328.2px;width:1px;height:9.900000000000034px;background:#a4a4a4"></div>
<div class="a" style="left:1182.2px;top:328.2px;width:1px;height:9.900000000000034px;background:#a4a4a4"></div>
<div class="a" style="left:1059px;top:342.1px;width:221px;height:24px;background:#ececec"></div>
<div class="t" style="left:1066.70px;top:349.58px;font-size:9px;color:#353535;letter-spacing:-0.401px;">Непрозрачность:</div>
<div class="a" style="left:1135.6px;top:346.7px;width:61px;height:15.8px;background:#fff;border:1px solid #cfcfcf;border-radius:2px"></div>
<div class="t" style="left:1139.80px;top:350.78px;font-size:9px;color:#353535;letter-spacing:-0.758px;word-spacing:0.758px;">100 %</div>
<svg class="a" style="left:1186px;top:352px;" width="8" height="5" viewBox="0 0 8 5"><path d="M0.5 0.5h6l-3 3.5z" fill="#111"/></svg>
<div class="a" style="left:1201.5px;top:346.7px;width:45.1px;height:15.8px;background:#fff;border:1px solid #cfcfcf;border-radius:2px"></div>
<div class="t" style="left:1205.00px;top:350.78px;font-size:9px;color:#353535;letter-spacing:0.141px;">Обычн</div>
<svg class="a" style="left:1236px;top:352px;" width="8" height="5" viewBox="0 0 8 5"><path d="M0.5 0.5h6l-3 3.5z" fill="#111"/></svg>
<svg class="a" style="left:1248px;top:349px;" width="12" height="12" viewBox="0 0 12 12"><g fill="#555"><circle cx="6" cy="6" r="3.6"/><rect x="5" y="0.6" width="2" height="2.6" transform="rotate(0 6 6)"/><rect x="5" y="0.6" width="2" height="2.6" transform="rotate(45 6 6)"/><rect x="5" y="0.6" width="2" height="2.6" transform="rotate(90 6 6)"/><rect x="5" y="0.6" width="2" height="2.6" transform="rotate(135 6 6)"/><rect x="5" y="0.6" width="2" height="2.6" transform="rotate(180 6 6)"/><rect x="5" y="0.6" width="2" height="2.6" transform="rotate(225 6 6)"/><rect x="5" y="0.6" width="2" height="2.6" transform="rotate(270 6 6)"/><rect x="5" y="0.6" width="2" height="2.6" transform="rotate(315 6 6)"/></g><circle cx="6" cy="6" r="1.5" fill="#ececec"/></svg>
<svg class="a" style="left:1264px;top:348px;" width="10" height="11" viewBox="0 0 10 11"><path d="M3 5 V3.2 Q3 1 5 1 Q7 1 7 3.2 V5" fill="none" stroke="#999" stroke-width="1"/><rect x="2" y="5" width="6" height="5" fill="#aaa"/></svg>
<div class="a" style="left:1059px;top:434.5px;width:221px;height:22.2px;background:#b9d9fb"></div>
<div class="a" style="left:1059.7px;top:388px;width:220.3px;height:1.2px;background:#cdcdcd"></div>
<div class="a" style="left:1059.7px;top:411px;width:220.3px;height:1.2px;background:#cdcdcd"></div>
<div class="a" style="left:1059.7px;top:479px;width:220.3px;height:1.2px;background:#cdcdcd"></div>
<svg class="a" style="left:1064px;top:374.5px;" width="9" height="7" viewBox="0 0 9 7"><path d="M0.7 0.8 H8.3 L4.5 6.3Z" fill="#666"/></svg>
<div class="a" style="left:1078px;top:368.2px;width:19.2px;height:18.8px;background:#d3d3d3"></div>
<svg class="a" style="left:1078px;top:368.2px;" width="20" height="19" viewBox="0 0 20 19"><circle cx="3.6" cy="9.4" r="1.3" fill="#e2185a"/><rect x="6" y="8.6" width="11" height="1.6" fill="#e8507a" opacity="0.55"/></svg>
<div class="t" style="left:1101.00px;top:373.70px;font-size:9.8px;color:#353535;letter-spacing:0.066px;">(Сгруппировать)</div>
<div class="t" style="left:1249.00px;top:370.42px;font-size:12.5px;color:#333;font-family:'Liberation Serif',serif;font-style:italic;letter-spacing:-0.5px;">fx</div>
<svg class="a" style="left:1263.7px;top:372.5px;" width="11" height="11" viewBox="0 0 11 11"><rect x="0.3" y="0.3" width="9.8" height="9.6" rx="1.5" fill="#3a8ee6" stroke="#2a78d0" stroke-width="0.6"/><path d="M2.2 5.2 L4.4 7.5 L8.5 2.5" fill="none" stroke="#fff" stroke-width="1.5"/></svg>
<div class="a" style="left:1090.5px;top:390.3px;width:19.2px;height:19.2px;background:#d3d3d3"></div>
<svg class="a" style="left:1090.5px;top:390.3px;" width="20" height="20" viewBox="0 0 20 20"><path d="M7 3 H5.8 Q5 3 5 4 V13 Q5 14.5 6.5 14.5 H13.5 Q15 14.5 15 13 V4 Q15 3 14 3 H13" fill="none" stroke="#d81858" stroke-width="1.3"/><rect x="7" y="5" width="6" height="6.8" rx="1.6" fill="#d81858"/><path d="M10 15 Q10 18 13 18 Q17.5 18 17.5 14 Q17.5 11.5 15 11 M5 11 Q2 12 2 15 Q2 18 7 18.3" fill="none" stroke="#d81858" stroke-width="1.1"/></svg>
<div class="t" style="left:1113.30px;top:396.10px;font-size:9.8px;color:#353535;letter-spacing:0.030px;">(Кривые)</div>
<svg class="a" style="left:1263.7px;top:395px;" width="11" height="11" viewBox="0 0 11 11"><rect x="0.3" y="0.3" width="9.8" height="9.6" rx="1.5" fill="#3a8ee6" stroke="#2a78d0" stroke-width="0.6"/><path d="M2.2 5.2 L4.4 7.5 L8.5 2.5" fill="none" stroke="#fff" stroke-width="1.5"/></svg>
<svg class="a" style="left:1077.5px;top:419px;" width="8" height="9" viewBox="0 0 8 9"><path d="M0.8 0.5 V8.3 L6.8 4.4Z" fill="#666"/></svg>
<div class="a" style="left:1090.5px;top:413.2px;width:19.2px;height:19.1px;background:#d3d3d3"></div>
<svg class="a" style="left:1090.5px;top:413.2px;" width="20" height="20" viewBox="0 0 20 20"><text x="9.8" y="11.6" font-size="5.2" text-anchor="middle" fill="#e2306a" font-family="Liberation Sans" font-weight="bold">iDoctor</text></svg>
<div class="t" style="left:1113.30px;top:419.00px;font-size:9.8px;color:#353535;letter-spacing:0.066px;">(Сгруппировать)</div>
<svg class="a" style="left:1263.7px;top:418px;" width="11" height="11" viewBox="0 0 11 11"><rect x="0.3" y="0.3" width="9.8" height="9.6" rx="1.5" fill="#3a8ee6" stroke="#2a78d0" stroke-width="0.6"/><path d="M2.2 5.2 L4.4 7.5 L8.5 2.5" fill="none" stroke="#fff" stroke-width="1.5"/></svg>
<div class="a" style="left:1078px;top:436.7px;width:19.2px;height:18.6px;background:radial-gradient(ellipse 45% 32% at 50% 50%, #fff 0%, #fafafa 55%, #d6d6d6 100%)"></div>
<div class="t" style="left:1101.00px;top:442.00px;font-size:9.8px;color:#2a3a4a;letter-spacing:-0.220px;">(Эллипс)</div>
<div class="t" style="left:1249.00px;top:438.72px;font-size:12.5px;color:#333;font-family:'Liberation Serif',serif;font-style:italic;letter-spacing:-0.5px;">fx</div>
<svg class="a" style="left:1263.7px;top:440.5px;" width="11" height="11" viewBox="0 0 11 11"><rect x="0.3" y="0.3" width="9.8" height="9.6" rx="1.5" fill="#3a8ee6" stroke="#2a78d0" stroke-width="0.6"/><path d="M2.2 5.2 L4.4 7.5 L8.5 2.5" fill="none" stroke="#fff" stroke-width="1.5"/></svg>
<div class="a" style="left:1078px;top:459.5px;width:19.2px;height:18px;background:linear-gradient(#e0e0e0 0%,#e0e0e0 20%,#d8b4bc 20%,#d8b4bc 100%)"></div>
<div class="t" style="left:1101.00px;top:465.00px;font-size:9.8px;color:#353535;letter-spacing:0.162px;">(Прямоугольник)</div>
<svg class="a" style="left:1263.7px;top:463.5px;" width="11" height="11" viewBox="0 0 11 11"><rect x="0.3" y="0.3" width="9.8" height="9.6" rx="1.5" fill="#3a8ee6" stroke="#2a78d0" stroke-width="0.6"/><path d="M2.2 5.2 L4.4 7.5 L8.5 2.5" fill="none" stroke="#fff" stroke-width="1.5"/></svg>
<div class="a" style="left:1059px;top:544.1px;width:221px;height:16.5px;background:#ececec;border-top:1px solid #f4f4f4"></div>
<div class="a" style="left:1059.9px;top:546.4px;width:13.1px;height:12.6px;background:#e2e2e2"></div>
<svg class="a" style="left:1060px;top:546px;" width="13" height="13" viewBox="0 0 13 13"><ellipse cx="6.5" cy="4.5" rx="4.5" ry="2.3" fill="none" stroke="#888" stroke-width="1"/><path d="M2 7 Q6.5 10 11 7 M2 9.3 Q6.5 12.3 11 9.3" fill="none" stroke="#888" stroke-width="1"/></svg>
<div class="a" style="left:1128.3px;top:547.2px;width:12.4px;height:10.5px;background:#fff;border:1px solid #999"></div>
<svg class="a" style="left:1128.3px;top:547.2px;" width="13" height="11" viewBox="0 0 13 11"><circle cx="6.2" cy="5.3" r="3.1" fill="#333"/></svg>
<svg class="a" style="left:1146px;top:547px;" width="12" height="12" viewBox="0 0 12 12"><circle cx="5.8" cy="5.6" r="4.6" fill="#fff" stroke="#333" stroke-width="1.1"/><path d="M5.8 1 A4.6 4.6 0 0 0 5.8 10.2Z" fill="#333"/></svg>
<div class="t" style="left:1162.00px;top:548.07px;font-size:11.5px;color:#333;letter-spacing:1.023px;font-family:'Liberation Serif',serif;font-style:italic;">fx</div>
<svg class="a" style="left:1231px;top:545px;" width="14" height="15" viewBox="0 0 14 15"><path d="M2.5 1.5 H8.5 L11.5 4.5 V13.5 H2.5Z" fill="#fff" stroke="#999" stroke-width="0.9"/></svg>
<svg class="a" style="left:1247px;top:545px;" width="15" height="15" viewBox="0 0 15 15"><path d="M5.5 1.5 H10 L13 4.5 V11 H5.5Z" fill="#fff" stroke="#aaa" stroke-width="0.9"/><path d="M2 4.5 H7 L9.5 7 V14 H2Z" fill="#fff" stroke="#999" stroke-width="0.9" stroke-dasharray="1.2 0.8"/></svg>
<svg class="a" style="left:1264px;top:545px;" width="13" height="15" viewBox="0 0 13 15"><rect x="1.5" y="2.5" width="10" height="1.5" fill="#777"/><rect x="5" y="1" width="3" height="1.6" fill="#777"/><path d="M2.5 4.5 H10.5 L10 13.5 H3Z" fill="#888"/><path d="M5 6v6M6.5 6v6M8 6v6" stroke="#ddd" stroke-width="0.6"/></svg>
<div class="a" style="left:1059px;top:561px;width:221px;height:19.600000000000023px;background:#c2c2c2"></div>
<div class="a" style="left:1065px;top:567px;width:1px;height:7.600000000000023px;background:#b2b2b2"></div>
<div class="a" style="left:1074px;top:561px;width:76.29999999999995px;height:20.600000000000023px;background:#efefef"></div>
<div class="t" style="left:1078.60px;top:566.24px;font-size:8.7px;color:#2a2a2a;letter-spacing:0.109px;">Трансформация</div>
<div class="t" style="left:1154.40px;top:566.24px;font-size:8.7px;color:#555;letter-spacing:0.214px;">История</div>
<div class="t" style="left:1197.80px;top:566.24px;font-size:8.7px;color:#555;letter-spacing:0.172px;">Навигатор</div>
<div class="a" style="left:1193.3px;top:566px;width:1px;height:10.600000000000023px;background:#a4a4a4"></div>
<div class="a" style="left:1059px;top:580.6px;width:221px;height:86.1px;background:#efefef"></div>
<svg class="a" style="left:1074px;top:596px;" width="36" height="34" viewBox="0 0 36 34"><rect x="6" y="5.3" width="25.5" height="25.5" fill="none" stroke="#4da3e8" stroke-width="1"/><rect x="16.0" y="3.0999999999999996" width="4.4" height="4.4" fill="#4aa0e8"/><rect x="29.3" y="3.0999999999999996" width="4.4" height="4.4" fill="#4aa0e8"/><rect x="3.3999999999999995" y="15.600000000000001" width="4.4" height="4.4" fill="#4aa0e8"/><rect x="16.0" y="15.600000000000001" width="4.4" height="4.4" fill="#4aa0e8"/><rect x="29.3" y="15.600000000000001" width="4.4" height="4.4" fill="#4aa0e8"/><rect x="3.3999999999999995" y="28.5" width="4.4" height="4.4" fill="#4aa0e8"/><rect x="16.0" y="28.5" width="4.4" height="4.4" fill="#4aa0e8"/><rect x="29.3" y="28.5" width="4.4" height="4.4" fill="#4aa0e8"/><rect x="2.2" y="1.8" width="7.6" height="7.3" fill="#1a5cf0"/></svg>
<div class="t" style="left:1124.40px;top:595.68px;font-size:9px;color:#353535;letter-spacing:-0.358px;">X:</div>
<div class="a" style="left:1135.6px;top:591.1px;width:53.7px;height:16px;background:#fff;border:1px solid #cfcfcf;border-radius:2px"></div>
<div class="t" style="left:1140.00px;top:595.68px;font-size:9px;color:#353535;letter-spacing:0.661px;word-spacing:-0.661px;">0 px</div>
<div class="t" style="left:1124.40px;top:615.68px;font-size:9px;color:#353535;letter-spacing:-0.108px;">Y:</div>
<div class="a" style="left:1135.6px;top:611.1px;width:53.7px;height:16px;background:#fff;border:1px solid #cfcfcf;border-radius:2px"></div>
<div class="t" style="left:1140.00px;top:615.68px;font-size:9px;color:#353535;letter-spacing:0.661px;word-spacing:-0.661px;">0 px</div>
<div class="t" style="left:1198.20px;top:595.68px;font-size:9px;color:#353535;letter-spacing:0.278px;">W:</div>
<div class="a" style="left:1212.9px;top:591.1px;width:53.8px;height:16px;background:#fff;border:1px solid #cfcfcf;border-radius:2px"></div>
<div class="t" style="left:1217.10px;top:595.68px;font-size:9px;color:#353535;">1280 px</div>
<div class="t" style="left:1201.10px;top:615.68px;font-size:9px;color:#353535;letter-spacing:-0.250px;">H:</div>
<div class="a" style="left:1212.9px;top:611.1px;width:53.8px;height:16px;background:#fff;border:1px solid #cfcfcf;border-radius:2px"></div>
<div class="t" style="left:1217.10px;top:615.68px;font-size:9px;color:#353535;">800 px</div>
<svg class="a" style="left:1270px;top:600px;" width="7" height="16" viewBox="0 0 7 16"><rect x="1.5" y="1" width="3.5" height="6" rx="1.7" fill="none" stroke="#777" stroke-width="1"/><rect x="1.5" y="8" width="3.5" height="6" rx="1.7" fill="none" stroke="#777" stroke-width="1"/><path d="M3.25 5 V10" stroke="#777" stroke-width="1"/></svg>
<div class="t" style="left:1124.40px;top:641.28px;font-size:9px;color:#353535;letter-spacing:-0.500px;">R:</div>
<div class="a" style="left:1135.6px;top:636.7px;width:53.7px;height:16px;background:#fff;border:1px solid #cfcfcf;border-radius:2px"></div>
<div class="t" style="left:1140.00px;top:641.28px;font-size:9px;color:#353535;letter-spacing:0.945px;word-spacing:-0.945px;">0 °</div>
<svg class="a" style="left:1180px;top:642px;" width="8" height="5" viewBox="0 0 8 5"><path d="M0.5 0.5h6l-3 3.5z" fill="#111"/></svg>
<div class="t" style="left:1202.90px;top:641.28px;font-size:9px;color:#353535;letter-spacing:-0.508px;">S:</div>
<div class="a" style="left:1212.9px;top:636.7px;width:53.8px;height:16px;background:#fff;border:1px solid #cfcfcf;border-radius:2px"></div>
<div class="t" style="left:1217.10px;top:641.28px;font-size:9px;color:#353535;letter-spacing:0.945px;word-spacing:-0.945px;">0 °</div>
<svg class="a" style="left:1257px;top:642px;" width="8" height="5" viewBox="0 0 8 5"><path d="M0.5 0.5h6l-3 3.5z" fill="#111"/></svg>
</body></html>
